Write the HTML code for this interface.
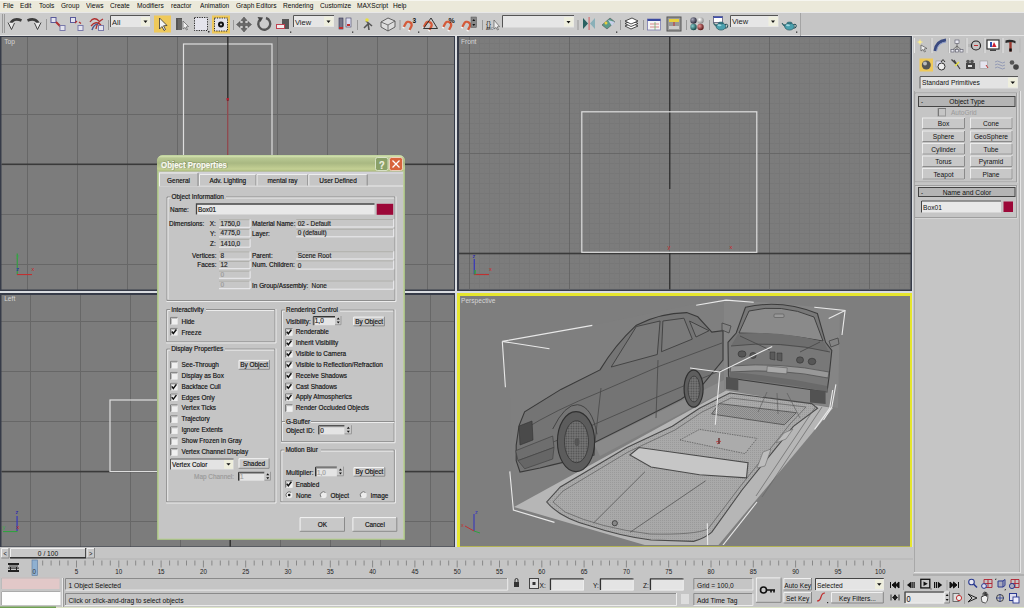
<!DOCTYPE html>
<html><head><meta charset="utf-8">
<style>
*{margin:0;padding:0;box-sizing:border-box}
html,body{width:1024px;height:608px;overflow:hidden;background:#c5c5c5;font-family:"Liberation Sans",sans-serif;font-size:7px;color:#1a1a1a;position:relative}
.a{position:absolute}
.t{position:absolute;white-space:nowrap;line-height:1}
svg{position:absolute;overflow:visible}
</style></head><body>
<div class="a" style="left:0;top:0;width:1024px;height:12px;background:#ebe9da;border-top:1px solid #f6f6f0"></div>
<div class="a" style="left:0;top:0;width:1024px;height:12px;color:#0a0a0a">
<span class="t" style="left:3px;top:2.4px;transform:scaleX(.94);transform-origin:0 0">File</span>
<span class="t" style="left:20px;top:2.4px;transform:scaleX(.94);transform-origin:0 0">Edit</span>
<span class="t" style="left:39px;top:2.4px;transform:scaleX(.94);transform-origin:0 0">Tools</span>
<span class="t" style="left:61px;top:2.4px;transform:scaleX(.94);transform-origin:0 0">Group</span>
<span class="t" style="left:86px;top:2.4px;transform:scaleX(.94);transform-origin:0 0">Views</span>
<span class="t" style="left:110px;top:2.4px;transform:scaleX(.94);transform-origin:0 0">Create</span>
<span class="t" style="left:137px;top:2.4px;transform:scaleX(.94);transform-origin:0 0">Modifiers</span>
<span class="t" style="left:171px;top:2.4px;transform:scaleX(.94);transform-origin:0 0">reactor</span>
<span class="t" style="left:200px;top:2.4px;transform:scaleX(.94);transform-origin:0 0">Animation</span>
<span class="t" style="left:236px;top:2.4px;transform:scaleX(.94);transform-origin:0 0">Graph Editors</span>
<span class="t" style="left:283px;top:2.4px;transform:scaleX(.94);transform-origin:0 0">Rendering</span>
<span class="t" style="left:320px;top:2.4px;transform:scaleX(.94);transform-origin:0 0">Customize</span>
<span class="t" style="left:357px;top:2.4px;transform:scaleX(.94);transform-origin:0 0">MAXScript</span>
<span class="t" style="left:393px;top:2.4px;transform:scaleX(.94);transform-origin:0 0">Help</span>
</div>
<div class="a" style="left:0;top:12px;width:1024px;height:24px;background:#c5c5c5;border-top:1px solid #e8e8e8;border-bottom:1px solid #e2e2e2"></div>
<div class="a" style="left:0;top:13px;width:800px;height:22px;background:#cbcbcb"></div>
<div class="a" style="left:800px;top:13px;width:1px;height:23px;background:#a4a4a4"></div>
<svg style="left:0;top:0" width="1024" height="40">
<!-- grip -->
<rect x="2" y="14" width="1" height="19" fill="#9a9a9a"/><rect x="4" y="14" width="1" height="19" fill="#9a9a9a"/>
<!-- undo / redo -->
<path d="M10 24.5 Q13 17 21.5 20.5" fill="none" stroke="#3c3c3c" stroke-width="2.6"/>
<path d="M8 22.5 L11.5 29.5 L14.5 23" fill="#e8e8e8" stroke="#333" stroke-width=".9"/>
<path d="M39 24.5 Q36 17 27.5 20.5" fill="none" stroke="#3c3c3c" stroke-width="2.6"/>
<path d="M41 22.5 L37.5 29.5 L34.5 23" fill="#e8e8e8" stroke="#333" stroke-width=".9"/>
<rect x="46" y="19" width="1" height="11" fill="#999"/>
<!-- link -->
<rect x="51" y="17.5" width="5" height="5" fill="#e4e4ee" stroke="#5a5a9a" stroke-width="1"/>
<path d="M56 22 L61 27" stroke="#b03030" stroke-width="2"/>
<rect x="60" y="25.5" width="5" height="5" fill="#e4e4ee" stroke="#7a7aaa" stroke-width="1"/>
<!-- unlink -->
<rect x="70.5" y="17.5" width="5" height="5" fill="#e4e4ee" stroke="#5a5a9a" stroke-width="1"/>
<path d="M75 23 L77 21 M79 22 L81 23.5" stroke="#b03030" stroke-width="1.2"/>
<rect x="78" y="25.5" width="5" height="5" fill="#e4e4ee" stroke="#7a7aaa" stroke-width="1"/>
<!-- bind -->
<path d="M90 22 Q94 16 99 21 M91 26 Q96 20 101 25 M96 29 Q97 22 103 19" fill="none" stroke="#b03030" stroke-width="1.3"/>
<path d="M92 30 Q94 24 98 24" fill="none" stroke="#4a5a90" stroke-width="1.5"/>
<rect x="98.5" y="25.5" width="5" height="5" fill="#e4e4ee" stroke="#7a7aaa" stroke-width="1"/>
<rect x="108" y="20" width="1" height="10" fill="#999"/>
<!-- All dropdown -->
<rect x="110" y="15.5" width="40" height="11.5" fill="#e6e6e6"/>
<path d="M110.5 27 V15.5 H150" fill="none" stroke="#555" stroke-width="1"/>
<rect x="141" y="17" width="9" height="9" fill="#efefdf"/>
<path d="M143.5 20.5 h4 l-2 2.5z" fill="#111"/>
<text x="112" y="24.5" font-size="7.5" fill="#222" font-family="Liberation Sans">All</text>
<!-- select (yellow) -->
<rect x="154" y="15.5" width="17" height="17" fill="#efc95a"/>
<path d="M159.5 18 V29 L162 26.5 L164 30.5 L165.5 29.5 L163.5 25.8 L167 25.5 Z" fill="#f4f4f4" stroke="#333" stroke-width=".8"/>
<!-- select by name -->
<path d="M176 18 h6 v1 h-4 v11 h-2z" fill="#555"/><rect x="178" y="19" width="4" height="11" fill="#666"/>
<path d="M183 21 V29 L185 27.5 L186.5 30 L187.5 29.5 L186 27 L188.5 26.5 Z" fill="#eee" stroke="#444" stroke-width=".6"/>
<!-- rect select -->
<rect x="194.5" y="17.5" width="13" height="13" fill="#e4e4ec" stroke="#222" stroke-width="1" stroke-dasharray="1.2 1.2"/>
<rect x="208" y="31" width="1.5" height="1.5" fill="#333"/>
<!-- window crossing yellow -->
<rect x="212" y="15.5" width="18" height="18" fill="#efc95a"/>
<rect x="214.5" y="18" width="13" height="13" fill="#e4e4ec" stroke="#222" stroke-width="1" stroke-dasharray="1.2 1.2"/>
<circle cx="221" cy="24.5" r="3" fill="#111"/><circle cx="221" cy="24.5" r="1" fill="#ddd"/>
<rect x="233" y="20" width="1" height="10" fill="#999"/>
<!-- move -->
<path d="M244 17 L247 20.5 H245 V23.5 H248 V21.5 L251.5 24.5 L248 27.5 V25.5 H245 V28.5 H247 L244 32 L241 28.5 H243 V25.5 H240 V27.5 L236.5 24.5 L240 21.5 V23.5 H243 V20.5 H241 Z" fill="#6a6a6a" stroke="#444" stroke-width=".5"/>
<!-- rotate -->
<path d="M260 19.5 A6 6 0 1 0 266 18" fill="none" stroke="#555" stroke-width="2.4"/>
<path d="M257.5 17 L263 17.5 L260.5 22 Z" fill="#444"/>
<!-- scale -->
<rect x="282" y="19" width="7" height="10" fill="#555"/>
<rect x="276.5" y="24.5" width="8" height="4" fill="#eee" stroke="#c04050" stroke-width="1"/>
<rect x="290" y="31.5" width="1.3" height="1.3" fill="#333"/>
<!-- View dropdown -->
<rect x="293" y="15" width="41" height="12" fill="#e6e6e6"/>
<path d="M293.5 27 V15.5 H334" fill="none" stroke="#555" stroke-width="1"/>
<rect x="324" y="16.5" width="9.5" height="9.5" fill="#efefdf"/>
<path d="M326.5 20.5 h4 l-2 2.5z" fill="#111"/>
<text x="295" y="24.5" font-size="7.5" fill="#222" font-family="Liberation Sans">View</text>
<!-- pivot -->
<rect x="339" y="18" width="4" height="11" fill="#778" stroke="#335" stroke-width=".6"/><rect x="339" y="27" width="4" height="2" fill="#c03030"/>
<rect x="346" y="18" width="5" height="9" fill="#dde" stroke="#446" stroke-width=".6"/><rect x="347" y="24" width="3" height="2" fill="#c03030"/>
<rect x="352" y="31.5" width="1.3" height="1.3" fill="#333"/>
<rect x="357" y="20" width="1" height="10" fill="#999"/>
<!-- manipulate -->
<path d="M364 28 L369 23 M366 21 L372 26 M368 23 L369 30" stroke="#555" stroke-width="1.6"/>
<circle cx="367" cy="20" r="1.8" fill="#e8e040"/>
<!-- keyboard override box -->
<path d="M381 22 L388 18 L395 21 L395 27 L388 31 L381 27 Z" fill="#ddd" stroke="#444" stroke-width=".8"/>
<path d="M381 22 L388 25 L395 21 M388 25 V31" fill="none" stroke="#555" stroke-width=".8"/>
<rect x="399.5" y="20" width="1" height="10" fill="#999"/>
<!-- snaps -->
<g transform="rotate(28 408.5 25)"><path d="M405.3 29 V25 A3.2 3.2 0 0 1 411.7 25 V29" fill="none" stroke="#d45a3a" stroke-width="2.3"/><path d="M404.2 29.6 h2.2 M410.6 29.6 h2.2" stroke="#f4f4f4" stroke-width="1.4"/></g><g transform="rotate(28 428.5 25)"><path d="M425.3 29 V25 A3.2 3.2 0 0 1 431.7 25 V29" fill="none" stroke="#d45a3a" stroke-width="2.3"/><path d="M424.2 29.6 h2.2 M430.6 29.6 h2.2" stroke="#f4f4f4" stroke-width="1.4"/></g><g transform="rotate(28 448 25)"><path d="M444.8 29 V25 A3.2 3.2 0 0 1 451.2 25 V29" fill="none" stroke="#d45a3a" stroke-width="2.3"/><path d="M443.7 29.6 h2.2 M450.1 29.6 h2.2" stroke="#f4f4f4" stroke-width="1.4"/></g><g transform="rotate(28 467 25)"><path d="M463.8 29 V25 A3.2 3.2 0 0 1 470.2 25 V29" fill="none" stroke="#d45a3a" stroke-width="2.3"/><path d="M462.7 29.6 h2.2 M469.1 29.6 h2.2" stroke="#f4f4f4" stroke-width="1.4"/></g>
<text x="412.5" y="23" font-size="6.5" font-weight="bold" fill="#111" font-family="Liberation Sans">3</text>
<path d="M423.5 28.5 H437.5 L431 18 Z" fill="none" stroke="#222" stroke-width=".9"/>
<text x="448.5" y="23" font-size="7" font-weight="bold" fill="#111" font-family="Liberation Sans">%</text>
<rect x="471" y="17" width="5.5" height="10.5" fill="#888" stroke="#555" stroke-width=".5"/><path d="M472.3 21 h3 l-1.5 -2z M472.3 24 h3 l-1.5 2z" fill="#111"/>
<rect x="418" y="31.5" width="1.3" height="1.3" fill="#333"/>
<rect x="482" y="20" width="1" height="10" fill="#999"/>
<!-- named sel icon -->
<text x="486" y="26" font-size="7.5" fill="#333" font-family="Liberation Sans">{}</text>
<text x="486" y="30" font-size="3.5" fill="#333" font-family="Liberation Sans">ABC</text>
<path d="M494 20 V29 L496 27.5 L497.5 30 L498.5 29.5 L497 27 L499.5 26.5 Z" fill="#eee" stroke="#444" stroke-width=".6"/>
<!-- named sel dropdown -->
<rect x="502" y="15.5" width="72" height="12" fill="#e6e6e6"/>
<path d="M502.5 27.5 V15.5 H574" fill="none" stroke="#555" stroke-width="1"/>
<rect x="564" y="17" width="9.5" height="9.5" fill="#efefdf"/>
<path d="M566.5 21 h4 l-2 2.5z" fill="#111"/>
<rect x="577.5" y="20" width="1" height="10" fill="#999"/>
<!-- mirror -->
<path d="M583 18 L588 23.5 L583 29 Z" fill="#2a6060"/><path d="M595 18 L590 23.5 L595 29 Z" fill="#8ab0b8"/>
<rect x="588.5" y="17" width="1.2" height="13" fill="#d07070"/>
<!-- align -->
<path d="M602 25 L610 18 L615 22 L607 29 Z" fill="#5a9a8a" stroke="#555" stroke-width=".6"/>
<path d="M608 20 L615 22 L612 26 Z" fill="#c8d0e8"/>
<circle cx="606" cy="23" r="1.5" fill="#e8d040"/>
<rect x="616" y="31.5" width="1.3" height="1.3" fill="#333"/>
<rect x="620" y="20" width="1" height="10" fill="#999"/>
<!-- layers -->
<g fill="#fff" stroke="#222" stroke-width=".8"><path d="M625 26 L632 23 L638 26 L631 29 Z"/><path d="M625 23.5 L632 20.5 L638 23.5 L631 26.5 Z"/><path d="M625 21 L632 18 L638 21 L631 24 Z"/></g>
<rect x="643" y="20" width="1" height="10" fill="#999"/>
<!-- curve editor -->
<rect x="647.5" y="19" width="13" height="11" fill="#f4f4f4" stroke="#7a7ab0" stroke-width=".8"/>
<rect x="647.5" y="19" width="13" height="2" fill="#3a4aa0"/>
<path d="M650 24 H659 M650 27 H659" stroke="#d07070" stroke-width=".8"/><path d="M655 22 V30" stroke="#70b070" stroke-width=".8"/>
<!-- schematic -->
<rect x="667" y="17" width="14" height="14" fill="#999" stroke="#555" stroke-width="1"/>
<rect x="669" y="19" width="10" height="3" fill="#e8d040"/><rect x="669" y="26" width="10" height="3" fill="#ccc"/><rect x="673.5" y="22" width="1" height="4" fill="#c03030"/>
<rect x="686" y="20" width="1" height="10" fill="#999"/>
<!-- material -->
<defs><radialGradient id="sp1" cx=".35" cy=".35" r=".7"><stop offset="0" stop-color="#aab"/><stop offset="1" stop-color="#223"/></radialGradient>
<radialGradient id="sp2" cx=".35" cy=".35" r=".7"><stop offset="0" stop-color="#fff"/><stop offset="1" stop-color="#888"/></radialGradient>
<radialGradient id="sp3" cx=".35" cy=".35" r=".7"><stop offset="0" stop-color="#8cc"/><stop offset="1" stop-color="#144"/></radialGradient>
<radialGradient id="sp4" cx=".35" cy=".35" r=".7"><stop offset="0" stop-color="#e99"/><stop offset="1" stop-color="#511"/></radialGradient></defs>
<circle cx="693.5" cy="20.5" r="3.2" fill="url(#sp1)"/><circle cx="700.5" cy="20.5" r="3.2" fill="url(#sp2)"/>
<circle cx="693.5" cy="27" r="3.2" fill="url(#sp3)"/><circle cx="700.5" cy="27" r="3.2" fill="url(#sp4)"/>
<rect x="709" y="20" width="1" height="10" fill="#999"/>
<!-- render scene -->
<rect x="713.5" y="16.5" width="9" height="6" fill="#fff" stroke="#446" stroke-width=".7"/><rect x="713.5" y="16.5" width="9" height="1.5" fill="#4050b0"/>
<path d="M716.5 26.5 Q714 25.5 713.5 23.0 Q715 25.0 717 25.0" fill="#3a8a98" stroke="#1e4a52" stroke-width=".6"/><path d="M725 24.5 Q728.5 23.5 727.5 27.0 Q727 28.5 725 28.0" fill="none" stroke="#1e4a52" stroke-width="1"/><ellipse cx="721" cy="26.5" rx="4.8" ry="3.6" fill="#4aa0ae" stroke="#1e4a52" stroke-width=".6"/><ellipse cx="719.5" cy="25.3" rx="2" ry="1" fill="#a0d8e0"/><ellipse cx="721" cy="22.9" rx="2.5" ry=".9" fill="#3a8a98" stroke="#1e4a52" stroke-width=".5"/>
<!-- render dropdown -->
<rect x="730" y="15" width="48.5" height="12" fill="#e6e6e6"/>
<path d="M730.5 27 V15.5 H778" fill="none" stroke="#555" stroke-width="1"/>
<rect x="768.5" y="16.5" width="9.5" height="9.5" fill="#efefdf"/>
<path d="M771 20.5 h4 l-2 2.5z" fill="#111"/>
<text x="732" y="24" font-size="7.5" fill="#222" font-family="Liberation Sans">View</text>
<!-- quick render -->
<path d="M785.0 26.5 Q782.5 25.5 782.0 23.0 Q783.5 25.0 785.5 25.0" fill="#3a8a98" stroke="#1e4a52" stroke-width=".6"/><path d="M793.5 24.5 Q797.0 23.5 796.0 27.0 Q795.5 28.5 793.5 28.0" fill="none" stroke="#1e4a52" stroke-width="1"/><ellipse cx="789.5" cy="26.5" rx="4.8" ry="3.6" fill="#4aa0ae" stroke="#1e4a52" stroke-width=".6"/><ellipse cx="788.0" cy="25.3" rx="2" ry="1" fill="#a0d8e0"/><ellipse cx="789.5" cy="22.9" rx="2.5" ry=".9" fill="#3a8a98" stroke="#1e4a52" stroke-width=".5"/>
<rect x="796" y="31.5" width="1.3" height="1.3" fill="#333"/>
</svg>
<svg class="a" style="left:0;top:0" width="913" height="548" viewBox="0 0 913 548">
<defs>
<pattern id="gTop" x="27" y="64" width="50" height="50" patternUnits="userSpaceOnUse"><rect width="50" height="50" fill="#7c7c7c"/><rect width="1" height="50" fill="#676767"/><rect width="50" height="1" fill="#676767"/></pattern>
<pattern id="gLeft" x="30" y="321" width="50" height="50" patternUnits="userSpaceOnUse"><rect width="50" height="50" fill="#7c7c7c"/><rect width="1" height="50" fill="#676767"/><rect width="50" height="1" fill="#676767"/></pattern>
<pattern id="gFront" x="469" y="53" width="10" height="10" patternUnits="userSpaceOnUse"><rect width="10" height="10" fill="#7c7c7c"/><rect width="1" height="10" fill="#777"/><rect width="10" height="1" fill="#777"/><rect x="5" width="1" height="10" fill="#7a7a7a"/><rect y="5" width="10" height="1" fill="#7a7a7a"/></pattern>
<pattern id="gFrontM" x="469" y="53" width="100" height="100" patternUnits="userSpaceOnUse"><rect width="1" height="100" fill="#676767"/><rect width="100" height="1" fill="#676767"/></pattern>
<pattern id="gPersp" x="0" y="0" width="10" height="10" patternUnits="userSpaceOnUse"><rect width="10" height="10" fill="#7c7c7c"/><rect width="1" height="10" fill="#777"/><rect width="10" height="1" fill="#777"/></pattern>
</defs>
<!-- separators -->
<rect x="0" y="36" width="913" height="512" fill="#d9dce0"/>
<!-- Top -->
<rect x="0" y="36" width="455" height="255" fill="#363b48"/>
<rect x="1.5" y="37" width="452.5" height="252.5" fill="url(#gTop)"/>
<!-- Front -->
<rect x="457" y="36" width="455" height="255" fill="#363b48"/>
<rect x="459" y="37" width="451.5" height="252.5" fill="url(#gFront)" />
<rect x="459" y="37" width="451.5" height="252.5" fill="url(#gFrontM)"/>
<!-- Left -->
<rect x="0" y="293" width="455" height="255" fill="#363b48"/>
<rect x="1.5" y="295" width="452.5" height="251.5" fill="url(#gLeft)"/>
<!-- Persp -->
<rect x="457" y="293" width="455" height="255" fill="#e6e62e"/>
<rect x="460" y="296" width="450" height="250.5" fill="#7e7e7e"/>
</svg>
<svg style="left:0;top:0" width="913" height="548">
<defs><clipPath id="cTop"><rect x="1.5" y="37" width="452.5" height="252.5"/></clipPath>
<clipPath id="cLeft"><rect x="1.5" y="295" width="452.5" height="251.5"/></clipPath>
<clipPath id="cFront"><rect x="459" y="37" width="452" height="252.5"/></clipPath>
<clipPath id="cPersp"><rect x="460" y="296" width="450" height="249"/></clipPath></defs>
<g font-family="Liberation Sans" font-size="7.2" fill="#d6d6d6">
<text x="4.2" y="44.3" transform="translate(4.2 0) scale(.92 1) translate(-4.2 0)">Top</text>
<text x="461" y="44.3" transform="translate(461 0) scale(.92 1) translate(-461 0)">Front</text>
<text x="4.2" y="301" transform="translate(4.2 0) scale(.92 1) translate(-4.2 0)">Left</text>
<text x="461" y="302.6" transform="translate(461 0) scale(.92 1) translate(-461 0)">Perspective</text>
</g>
<!-- Top viewport -->
<g clip-path="url(#cTop)">
<rect x="1.5" y="163.5" width="453" height="1.6" fill="#3a3a3a"/>
<rect x="183.5" y="44" width="88.5" height="200" fill="none" stroke="#dedede" stroke-width="1.2"/>
<rect x="227.2" y="37" width="1.3" height="64" fill="#2a2a2a"/>
<rect x="227.3" y="101" width="1" height="60" fill="#a04048"/>
<rect x="226.5" y="98" width="2.5" height="2.5" fill="#b02030"/>
<!-- tripod -->
<rect x="16.7" y="253.5" width="1.1" height="21" fill="#30a040"/>
<rect x="17" y="274" width="15" height="1.1" fill="#c03030"/>
<text x="16" y="258" font-size="5.5" fill="#30b040" font-family="Liberation Sans">y</text>
<text x="16.3" y="271" font-size="5.5" fill="#2020b0" font-family="Liberation Sans">z</text>
<text x="31.5" y="271" font-size="5.5" fill="#d02020" font-family="Liberation Sans">x</text>
</g>
<!-- Front viewport -->
<g clip-path="url(#cFront)">
<rect x="459" y="252.7" width="453" height="1.6" fill="#3a3a3a"/>
<rect x="669.2" y="37" width="1.2" height="152" fill="#2a2a2a"/>
<rect x="669.2" y="253" width="1.2" height="37" fill="#2a2a2a"/>
<rect x="581.8" y="111.8" width="175" height="140.5" fill="none" stroke="#dedede" stroke-width="1.2"/>
<text x="667.5" y="249" font-size="5.5" fill="#d02020" font-family="Liberation Sans">y</text>
<text x="729.5" y="249" font-size="5.5" fill="#d02020" font-family="Liberation Sans">x</text>
<rect x="473.7" y="259" width="1.1" height="15.5" fill="#3030c0"/>
<rect x="474" y="274" width="15" height="1.1" fill="#c03030"/>
<rect x="474.3" y="270" width="1.5" height="4.5" fill="#30a040"/>
<text x="472.5" y="258" font-size="5.5" fill="#2020b0" font-family="Liberation Sans">z</text>
<text x="489" y="271" font-size="5.5" fill="#d02020" font-family="Liberation Sans">x</text>
</g>
<!-- Left viewport -->
<g clip-path="url(#cLeft)">
<rect x="1.5" y="470.8" width="453" height="1.6" fill="#3a3a3a"/><rect x="229.5" y="295" width="1.3" height="252" fill="#2a2a2a"/>
<rect x="110" y="400" width="100" height="71.5" fill="none" stroke="#dedede" stroke-width="1.2"/>
<rect x="16.5" y="516" width="1.1" height="15" fill="#3030c0"/>
<rect x="3" y="531" width="14.5" height="1.1" fill="#30a040"/>
<text x="15.5" y="514" font-size="5.5" fill="#2020b0" font-family="Liberation Sans">z</text>
<text x="2.5" y="529" font-size="5.5" fill="#30b040" font-family="Liberation Sans">y</text>
<text x="16.5" y="529" font-size="5.5" fill="#d02020" font-family="Liberation Sans">x</text>
</g>
</svg>
<svg style="left:0;top:0" width="913" height="548">
<defs><pattern id="hatch" width="2" height="2" patternUnits="userSpaceOnUse"><rect width="2" height="2" fill="#a9a9a9"/><rect width="1" height="1" fill="#9a9a9a"/></pattern>
<pattern id="hatch2" width="2" height="2" patternUnits="userSpaceOnUse"><rect width="2" height="2" fill="#9c9c9c"/><rect width="1" height="1" fill="#868686"/><rect x="1" y="1" width="1" height="1" fill="#8a8a8a"/></pattern></defs>
<g clip-path="url(#cPersp)">
<!-- side plane -->
<polygon points="508,343 724,298 724,391 514,508" fill="#7f7f7f"/><polygon points="594,444 724,380 724,391 600,456" fill="#8a8a8a"/>
<!-- front plane -->
<polygon points="724,299 840,309 838,408 724,391" fill="#858585"/>
<!-- floor plane -->
<polygon points="514,507 726,390.5 833,408 716,548 655,548" fill="#b6b6b6"/>
<!-- car top view -->
<path d="M546.7 502 Q560 518 590.5 526 Q620 536 651 540 L693.5 541.4 Q705 538 711.6 532.3 L742 490 L793.4 426.3 L817.6 408.2 L811.6 403.6 L729.8 393 L699.5 408.2 L672.3 426.3 L626.9 447.5 L560.3 487 Z" fill="url(#hatch)" stroke="#4a4a4a" stroke-width="1.1"/>
<path d="M553 502 L563 491 L628 452 L675 430 L702 412 L731 398 L806 407 L790 424 L739 488 L708 529 Q695 535 650 534 Q600 528 565 512 Z" fill="none" stroke="#666" stroke-width=".8"/>
<!-- windshield -->
<polygon points="629.9,455 639,447.5 748,462.7 746.5,477.8 699.5,474.8 651,467" fill="#c6c6c6" stroke="#4a4a4a" stroke-width="1.1"/>
<!-- sunroof -->
<polygon points="680,440 699.5,429.4 757,438.4 745,453.6" fill="#ababab" stroke="#555" stroke-width=".7" stroke-dasharray="1.5 1"/>
<!-- rear window -->
<polygon points="711.6,414 719.2,403.6 796.4,412.7 784.3,424.8" fill="url(#hatch2)" stroke="#555" stroke-width=".9"/>
<path d="M757 468 L763 452 L771 449 L765 466 Z M776 443 L784 433 L793 429 L786 439 Z" fill="#bdbdbd" stroke="#6a6a6a" stroke-width=".6"/><path d="M816 406 L756 496 M822 407 L762 497" fill="none" stroke="#666" stroke-width=".7"/>
<path d="M593.6 523 L645 471.7 M630 532.3 L705.6 480.8" stroke="#4a4a4a" stroke-width=".7"/>
<circle cx="614.8" cy="523.2" r="2.6" fill="#888" stroke="#333" stroke-width=".8"/>
<!-- side car -->
<path d="M516.2 460.7 L516.2 445.3 L519 425.8 L524.6 411.8 L560.9 389.4 L600 369.9 Q615 345 636.4 325.2 Q660 313 686.7 312.6 L697.8 316.8 L711.8 332.1 L723 330.7 L723 360.1 L703.4 383.8 L681 399.2 L594.4 442.5 L594 455 L552.5 464.9 L540 468 L520 472 Z" fill="#747474" stroke="#3a3a3a" stroke-width="1.1"/>
<path d="M611.2 367 L636.4 326.5 L660.1 321 L657.3 354.5 Z M662.9 321 L683.9 318.2 L692.3 339.1 L661.5 351.7 Z M689.5 321 L709 330.7 L696 337 Z" fill="#7a7a7a" stroke="#3e3e3e" stroke-width=".9"/>
<path d="M523 430 Q555 410 600 392 L660 366 L722 343 M530 452 L595 424 L650 400 L722 370 M601 388 L595 442 M658 360 L656 418" fill="none" stroke="#484848" stroke-width=".8"/>

<defs><pattern id="mesh" width="2.5" height="2.5" patternUnits="userSpaceOnUse"><rect width="2.5" height="2.5" fill="#777"/><circle cx="1.25" cy="1.25" r=".8" fill="#4a4a4a"/></pattern></defs>
<path d="M552.7 429 Q565 404 577.4 404.7 Q592 406 597 434.3" fill="none" stroke="#444" stroke-width="1"/>
<ellipse cx="576" cy="441.6" rx="18.6" ry="30" fill="#5c5c5c" stroke="#303030" stroke-width="1.1"/>
<ellipse cx="576.5" cy="441.7" rx="12" ry="21" fill="url(#mesh)" stroke="#3a3a3a" stroke-width=".9"/>
<ellipse cx="577" cy="442" rx="2.5" ry="4" fill="#555"/>
<ellipse cx="693.6" cy="388.7" rx="9.5" ry="18.5" fill="#5e5e5e" stroke="#303030" stroke-width="1.2"/>
<ellipse cx="694" cy="389" rx="6" ry="13" fill="url(#mesh)" stroke="#3c3c3c" stroke-width=".8"/>
<path d="M519 426 L532 421 L533 440 L520 445 Z" fill="#4a4a4a" stroke="#333" stroke-width=".6"/>
<path d="M515.7 450.7 L552.7 436 L554 447.4 L518 460.6 Z" fill="#6e6e6e" stroke="#444" stroke-width=".7"/><path d="M518 460.6 L554 447.4 L552.7 459 L524.7 468.8 Z" fill="#666" stroke="#444" stroke-width=".7"/>
<!-- front car -->
<path d="M745.5 307.3 Q781 299 817.4 313.5 L825.6 342.3 L831.8 350.5 L829 377.2 L827 392 L729 378 L728.5 375 L728 342.3 L736.2 333 Z" fill="#787878" stroke="#3c3c3c" stroke-width="1.1"/>
<path d="M749 311 Q781 303 814 317 L823 341 Q780 333 739 333 Z" fill="#8a8a8a" stroke="#404040" stroke-width="1"/>
<rect x="774" y="314" width="10" height="3.5" rx="1" fill="#999" stroke="#555" stroke-width=".6"/>
<path d="M738 334 Q780 330 824 342 L829 352 Q780 342 731 346 Z" fill="#6e6e6e"/>
<path d="M731 346 Q780 340 830 352 M740 336 L770 350 M820 342 L800 352" fill="none" stroke="#454545" stroke-width=".8"/>
<path d="M731 366 Q780 362 829 372 L828 378 Q780 368 730 372 Z" fill="#989898" stroke="#4a4a4a" stroke-width=".7"/>
<rect x="767" y="367" width="20" height="6" fill="#aaa" stroke="#555" stroke-width=".5" transform="rotate(5 777 370)"/>
<path d="M730 378 Q780 382 828 392 L827 386 Q780 376 730 372 Z" fill="#6a6a6a"/>
<g fill="#565656" stroke="#333" stroke-width=".6"><ellipse cx="742" cy="354" rx="4" ry="3.2"/><ellipse cx="753" cy="355.5" rx="3.2" ry="3"/><ellipse cx="800" cy="360" rx="3.5" ry="3.2"/><ellipse cx="812" cy="361.5" rx="3.8" ry="3.3"/></g>
<path d="M770 352 l5 0 l0 8 l-5 -1z M777 353 l5 0 l0 8 l-5 -1z" fill="#5a5a5a" stroke="#333" stroke-width=".5"/>
<path d="M726 377 L738.3 378.5 L738.3 390.5 L726 389 Z" fill="#525252"/>
<path d="M810 389.5 L825.6 391 L825.6 404 L810 402.5 Z" fill="#525252"/>
<path d="M722 323 l9 3 l-2 7 l-7 -3z M829 341 l9 -3 l1 6 l-8 3z" fill="#838383" stroke="#444" stroke-width=".8"/>
<path d="M767 392 L758 412 M787 393 L800 418 M777 393 L778 414" stroke="#555" stroke-width=".6"/>
<!-- selection brackets -->
<g fill="none" stroke="#e8e8e8" stroke-width="1.1">
<path d="M592.3 325.4 L502.3 341.4 L549.5 348.8 M502.3 341.4 L505.4 387.3"/>
<path d="M696.2 305.3 L726 300.1 L753.7 302.2"/>
<path d="M814.3 307.3 L845.1 310.4 L842 335 M845.1 310.4 L828.7 318.6"/>
<path d="M835.9 384.4 L831.8 407 L823.5 420"/>
<path d="M772.2 346.4 L719.8 372 L690 368 M719.8 372 L715.3 424.8"/>
<path d="M509.8 471.4 L513.4 510 L554.5 522.4"/>
<path d="M707.3 523.2 L707.7 548"/>
<path d="M757 502 L720.7 548"/>
<path d="M832.7 390 L829.7 408.2 L814.6 429.4"/>
</g>
<path d="M716 442 l3 -1 M719 438 v6 M717 444 l4 -3" stroke="#c03030" stroke-width=".8"/>
<path d="M719 438 v6" stroke="#222" stroke-width=".8"/>
<!-- tripod -->
<rect x="473.5" y="514" width="1" height="17" fill="#3030c0"/>
<path d="M474 531 L465 526" stroke="#c03030" stroke-width="1"/>
<path d="M474 531 L480 533" stroke="#30a040" stroke-width="1"/>
<text x="475" y="514" font-size="5.5" fill="#3030c0" font-family="Liberation Sans">z</text>
<text x="461" y="527" font-size="5.5" fill="#c03030" font-family="Liberation Sans">x</text>
</g>
</svg>
<div class="a" style="left:913px;top:36px;width:111px;height:512px;background:#c5c5c5"></div>
<div class="a" style="left:914px;top:91px;width:1px;height:482px;background:#a8a8a8"></div>
<div class="a" style="left:1019px;top:91px;width:1px;height:481px;background:#b0b0b0"></div><div class="a" style="left:1020px;top:91px;width:1px;height:482px;background:#e4e4e4"></div>
<svg style="left:0;top:0" width="1024" height="608">
<!-- tabs -->
<g fill="#b8b8b8"><rect x="930.5" y="38.5" width="1" height="14"/><rect x="948" y="38.5" width="1" height="14"/><rect x="965.5" y="38.5" width="1" height="14"/><rect x="983.5" y="38.5" width="1" height="14"/><rect x="1001.5" y="38.5" width="1" height="14"/><rect x="1019.5" y="38.5" width="1" height="14"/></g>
<g fill="#e6e6e6"><rect x="914" y="38" width="1" height="15"/><rect x="931.5" y="38" width="1" height="15"/><rect x="949" y="38" width="1" height="15"/><rect x="966.5" y="38" width="1" height="15"/><rect x="984.5" y="38" width="1" height="15"/><rect x="1002.5" y="38" width="1" height="15"/></g>
<!-- create icon -->
<path d="M921 45 V51 L923 49.5 L924.5 52 L925.5 51.5 L924 49 L927 48.5 Z" fill="#f0f0f0" stroke="#555" stroke-width=".7"/>
<circle cx="920" cy="42" r="1.6" fill="#fff6a0"/><path d="M917 42 h6 M920 39 v6" stroke="#f4e080" stroke-width=".6"/>
<!-- modify arc -->
<path d="M935 51 Q936 41 946 40" fill="none" stroke="#3a4a80" stroke-width="3"/>
<path d="M936.5 51 Q937.5 43 946 42" fill="none" stroke="#8898c8" stroke-width="1"/>
<!-- hierarchy -->
<rect x="955" y="40" width="4" height="3.5" fill="#e8e8f0" stroke="#556" stroke-width=".6"/>
<path d="M957 43.5 V46 M957 46 L952.5 50 M957 46 L957 50 M957 46 L961.5 50" stroke="#555" stroke-width=".7"/>
<g fill="#e8e8f0" stroke="#556" stroke-width=".6"><rect x="951" y="49.5" width="3" height="2.5"/><rect x="955.5" y="49.5" width="3" height="2.5"/><rect x="960" y="49.5" width="3" height="2.5"/></g>
<!-- motion -->
<circle cx="976" cy="45.5" r="4.5" fill="#c5c5c5" stroke="#222" stroke-width="1.2"/>
<path d="M974 45.5 h4" stroke="#c03030" stroke-width="1"/>
<path d="M969 44 v3 M970.5 43.5 v4" stroke="#999" stroke-width=".6"/>
<!-- display -->
<rect x="987" y="40" width="12" height="9" fill="#fff" stroke="#333" stroke-width="1.2"/>
<path d="M990 47 V42 h2 v5z" fill="#3050b0"/><path d="M992 47 L994 42 L996.5 47z" fill="#d02030"/>
<rect x="990" y="49.5" width="6" height="1.5" fill="#444"/>
<!-- utilities hammer -->
<path d="M1005.5 40.5 Q1010 39 1015.5 41 L1015.5 43.5 Q1012.5 41.8 1010.5 42.5 L1008 42.5 L1005.5 43 Z" fill="#2a2a2a"/><rect x="1009.3" y="42" width="2.4" height="9.5" fill="#9a3a30"/><rect x="1009.3" y="48.5" width="2.4" height="3" fill="#111"/>
<!-- row2 -->
<rect x="919.5" y="58.5" width="13.5" height="13" fill="#efc95a"/>
<circle cx="926.3" cy="65" r="4.5" fill="#555"/><circle cx="925" cy="63.5" r="2" fill="#bbb"/>
<g>
<rect x="936" y="61" width="6" height="6" fill="#dde" stroke="#888" stroke-width=".5"/><circle cx="941.5" cy="66.5" r="3.5" fill="#eee" stroke="#333" stroke-width="1"/><path d="M941 62 L943 59.5 L945 62" fill="none" stroke="#333" stroke-width="1"/>
</g>
<path d="M951.5 59.5 L956 64 M954 60 L960 69" stroke="#444" stroke-width="1.2"/><path d="M955 66 L959 62" stroke="#e8e040" stroke-width="1.5"/>
<rect x="966" y="63" width="9" height="6" fill="#444"/><circle cx="968" cy="61.5" r="1.8" fill="#555"/><circle cx="972" cy="61.5" r="1.8" fill="#555"/><rect x="968" y="65" width="4" height="2" fill="#e0e0e0"/>
<rect x="980" y="61" width="7.5" height="7.5" fill="#e4e4ee" stroke="#999" stroke-width=".6"/><path d="M986 65 l2 3" stroke="#c03030" stroke-width="1"/>
<path d="M995 62 q2.5 -2 5 0 t5 0 M995 65 q2.5 -2 5 0 t5 0 M995 68 q2.5 -2 5 0 t5 0" fill="none" stroke="#8890b0" stroke-width=".8"/>
<circle cx="1012" cy="62.5" r="2.3" fill="#555"/><circle cx="1016" cy="67" r="2.8" fill="#444"/>
<!-- dropdown -->
<rect x="919.5" y="76" width="98.5" height="12.5" fill="#e3e3e3"/>
<path d="M920 88.5 V76.5 H1018" fill="none" stroke="#555" stroke-width="1"/>
<rect x="1008" y="77.5" width="9.5" height="10" fill="#eeeedd"/>
<path d="M1010.5 81.5 h4.5 l-2.25 2.5z" fill="#111"/>
<text transform="translate(922 85.3) scale(0.88 1)" font-size="7.6" fill="#111" font-family="Liberation Sans">Standard Primitives</text>
<!-- rollout object type -->
<rect x="915.5" y="93.5" width="101.5" height="89" fill="none" stroke="#e4e4e4" stroke-width="1"/>
<rect x="915" y="93" width="101.5" height="89" fill="none" stroke="#9e9e9e" stroke-width="1"/>
<rect x="918.5" y="96.5" width="96.5" height="10" fill="#b4b4b4" stroke="#444" stroke-width="1"/>
<text transform="translate(921 104) scale(0.88 1)" font-size="7" fill="#111" font-family="Liberation Sans">-</text>
<text transform="translate(967 104) scale(0.88 1)" font-size="7.6" fill="#111" font-family="Liberation Sans" text-anchor="middle">Object Type</text>
<rect x="938" y="108.5" width="7.5" height="7.5" fill="none" stroke="#999" stroke-width="1"/>
<path d="M938.5 116 V108.5 H946" fill="none" stroke="#777" stroke-width="1"/>
<text transform="translate(951 115) scale(0.88 1)" font-size="7.4" fill="#999" font-family="Liberation Sans">AutoGrid</text>
<g font-family="Liberation Sans" font-size="7.6" fill="#111" text-anchor="middle">
<rect x="922.5" y="118" width="42" height="10.5" fill="#c8c8c8" stroke="#ececec" stroke-width="1"/><path d="M922.5 128.5 H964.5 V118" stroke="#8a8a8a" fill="none"/><text transform="translate(943.5 126) scale(0.88 1)">Box</text>
<rect x="970.5" y="118" width="41.5" height="10.5" fill="#c8c8c8" stroke="#ececec" stroke-width="1"/><path d="M970.5 128.5 H1012 V118" stroke="#8a8a8a" fill="none"/><text transform="translate(991 126) scale(0.88 1)">Cone</text>
<rect x="922.5" y="131" width="42" height="10.5" fill="#c8c8c8" stroke="#ececec" stroke-width="1"/><path d="M922.5 141.5 H964.5 V131" stroke="#8a8a8a" fill="none"/><text transform="translate(943.5 139) scale(0.88 1)">Sphere</text>
<rect x="970.5" y="131" width="41.5" height="10.5" fill="#c8c8c8" stroke="#ececec" stroke-width="1"/><path d="M970.5 141.5 H1012 V131" stroke="#8a8a8a" fill="none"/><text transform="translate(991 139) scale(0.88 1)">GeoSphere</text>
<rect x="922.5" y="143.5" width="42" height="10.5" fill="#c8c8c8" stroke="#ececec" stroke-width="1"/><path d="M922.5 154 H964.5 V143.5" stroke="#8a8a8a" fill="none"/><text transform="translate(943.5 151.5) scale(0.88 1)">Cylinder</text>
<rect x="970.5" y="143.5" width="41.5" height="10.5" fill="#c8c8c8" stroke="#ececec" stroke-width="1"/><path d="M970.5 154 H1012 V143.5" stroke="#8a8a8a" fill="none"/><text transform="translate(991 151.5) scale(0.88 1)">Tube</text>
<rect x="922.5" y="156" width="42" height="10.5" fill="#c8c8c8" stroke="#ececec" stroke-width="1"/><path d="M922.5 166.5 H964.5 V156" stroke="#8a8a8a" fill="none"/><text transform="translate(943.5 164) scale(0.88 1)">Torus</text>
<rect x="970.5" y="156" width="41.5" height="10.5" fill="#c8c8c8" stroke="#ececec" stroke-width="1"/><path d="M970.5 166.5 H1012 V156" stroke="#8a8a8a" fill="none"/><text transform="translate(991 164) scale(0.88 1)">Pyramid</text>
<rect x="922.5" y="168.5" width="42" height="10.5" fill="#c8c8c8" stroke="#ececec" stroke-width="1"/><path d="M922.5 179 H964.5 V168.5" stroke="#8a8a8a" fill="none"/><text transform="translate(943.5 176.5) scale(0.88 1)">Teapot</text>
<rect x="970.5" y="168.5" width="41.5" height="10.5" fill="#c8c8c8" stroke="#ececec" stroke-width="1"/><path d="M970.5 179 H1012 V168.5" stroke="#8a8a8a" fill="none"/><text transform="translate(991 176.5) scale(0.88 1)">Plane</text>
</g>
<!-- name and color -->
<rect x="915.5" y="186" width="101.5" height="32" fill="none" stroke="#e4e4e4" stroke-width="1"/>
<rect x="915" y="185.5" width="101.5" height="32" fill="none" stroke="#9e9e9e" stroke-width="1"/>
<rect x="918.5" y="187.5" width="96.5" height="9" fill="#b4b4b4" stroke="#444" stroke-width="1"/>
<text transform="translate(921 194.5) scale(0.88 1)" font-size="7" fill="#111" font-family="Liberation Sans">-</text>
<text transform="translate(967 194.5) scale(0.88 1)" font-size="7.6" fill="#111" font-family="Liberation Sans" text-anchor="middle">Name and Color</text>
<rect x="921" y="200.5" width="80" height="12" fill="#e8e8e8"/>
<path d="M921.5 212.5 V201 H1001" fill="none" stroke="#444" stroke-width="1"/>
<text transform="translate(923 209.5) scale(0.88 1)" font-size="7.6" fill="#111" font-family="Liberation Sans">Box01</text>
<rect x="1003.5" y="201.5" width="9.5" height="10.5" fill="#9c0838"/>
</svg>
<svg style="left:0;top:0" width="1024" height="608"><g font-family="Liberation Sans">
<rect x="0" y="547" width="913" height="61" fill="#c5c5c5"/>
<rect x="1" y="548" width="8.5" height="10.5" fill="#c8c8c8"/>
<path d="M1.5 558.5 V548.5 H9.5" fill="none" stroke="#f0f0f0" stroke-width="1"/>
<path d="M1 558.0 H9.0 V548" fill="none" stroke="#858585" stroke-width="1"/>
<text transform="translate(5.2 556) scale(0.83 1)" font-size="7" fill="#111" text-anchor="middle">&lt;</text>
<rect x="10" y="548" width="76" height="10.5" fill="#c8c8c8"/>
<path d="M10.5 558.5 V548.5 H86" fill="none" stroke="#f0f0f0" stroke-width="1"/>
<path d="M10 558.0 H85.5 V548" fill="none" stroke="#858585" stroke-width="1"/>
<path d="M10 557.8 H86 V548" fill="none" stroke="#333" stroke-width="1.4"/>
<text transform="translate(48 556.3) scale(0.83 1)" font-size="8" fill="#111" text-anchor="middle">0 / 100</text>
<rect x="86.5" y="548" width="8.5" height="10.5" fill="#c8c8c8"/>
<path d="M87.0 558.5 V548.5 H95" fill="none" stroke="#f0f0f0" stroke-width="1"/>
<path d="M86.5 558.0 H94.5 V548" fill="none" stroke="#858585" stroke-width="1"/>
<text transform="translate(90.8 556) scale(0.83 1)" font-size="7" fill="#111" text-anchor="middle">&gt;</text>
<rect x="95" y="558.5" width="818" height="1" fill="#b4b4b4"/>
<rect x="8" y="563" width="11" height="2" fill="#222"/>
<rect x="9" y="565.5" width="9" height="1" fill="#444"/>
<rect x="8" y="567.5" width="11" height="1.2" fill="#333"/>
<rect x="8" y="570" width="11" height="2" fill="#222"/>
<path d="M10.5 567 v3 M16.5 567 v3" fill="none" stroke="#222" stroke-width="1"/>
<rect x="32" y="560" width="5.5" height="15.5" fill="#8fb0d0" stroke="#5a7aa0" stroke-width="0.6"/>
<path d="M42.7 560.5 v5 M51.1 560.5 v5 M59.6 560.5 v5 M68.0 560.5 v5 M76.5 560.5 v7 M85.0 560.5 v5 M93.4 560.5 v5 M101.9 560.5 v5 M110.3 560.5 v5 M118.8 560.5 v7 M127.3 560.5 v5 M135.7 560.5 v5 M144.2 560.5 v5 M152.6 560.5 v5 M161.1 560.5 v7 M169.6 560.5 v5 M178.0 560.5 v5 M186.5 560.5 v5 M194.9 560.5 v5 M203.4 560.5 v7 M211.9 560.5 v5 M220.3 560.5 v5 M228.8 560.5 v5 M237.2 560.5 v5 M245.7 560.5 v7 M254.2 560.5 v5 M262.6 560.5 v5 M271.1 560.5 v5 M279.5 560.5 v5 M288.0 560.5 v7 M296.5 560.5 v5 M304.9 560.5 v5 M313.4 560.5 v5 M321.8 560.5 v5 M330.3 560.5 v7 M338.8 560.5 v5 M347.2 560.5 v5 M355.7 560.5 v5 M364.1 560.5 v5 M372.6 560.5 v7 M381.1 560.5 v5 M389.5 560.5 v5 M398.0 560.5 v5 M406.4 560.5 v5 M414.9 560.5 v7 M423.4 560.5 v5 M431.8 560.5 v5 M440.3 560.5 v5 M448.7 560.5 v5 M457.2 560.5 v7 M465.7 560.5 v5 M474.1 560.5 v5 M482.6 560.5 v5 M491.0 560.5 v5 M499.5 560.5 v7 M508.0 560.5 v5 M516.4 560.5 v5 M524.9 560.5 v5 M533.3 560.5 v5 M541.8 560.5 v7 M550.3 560.5 v5 M558.7 560.5 v5 M567.2 560.5 v5 M575.6 560.5 v5 M584.1 560.5 v7 M592.6 560.5 v5 M601.0 560.5 v5 M609.5 560.5 v5 M617.9 560.5 v5 M626.4 560.5 v7 M634.9 560.5 v5 M643.3 560.5 v5 M651.8 560.5 v5 M660.2 560.5 v5 M668.7 560.5 v7 M677.2 560.5 v5 M685.6 560.5 v5 M694.1 560.5 v5 M702.5 560.5 v5 M711.0 560.5 v7 M719.5 560.5 v5 M727.9 560.5 v5 M736.4 560.5 v5 M744.8 560.5 v5 M753.3 560.5 v7 M761.8 560.5 v5 M770.2 560.5 v5 M778.7 560.5 v5 M787.1 560.5 v5 M795.6 560.5 v7 M804.1 560.5 v5 M812.5 560.5 v5 M821.0 560.5 v5 M829.4 560.5 v5 M837.9 560.5 v7 M846.4 560.5 v5 M854.8 560.5 v5 M863.3 560.5 v5 M871.7 560.5 v5 M880.2 560.5 v7" fill="none" stroke="#888" stroke-width="1"/>
<text transform="translate(34.2 573.6) scale(0.83 1)" font-size="7.5" fill="#333" text-anchor="middle">0</text>
<text transform="translate(76.5 573.6) scale(0.83 1)" font-size="7.5" fill="#222" text-anchor="middle">5</text>
<text transform="translate(118.80000000000001 573.6) scale(0.83 1)" font-size="7.5" fill="#222" text-anchor="middle">10</text>
<text transform="translate(161.10000000000002 573.6) scale(0.83 1)" font-size="7.5" fill="#222" text-anchor="middle">15</text>
<text transform="translate(203.40000000000003 573.6) scale(0.83 1)" font-size="7.5" fill="#222" text-anchor="middle">20</text>
<text transform="translate(245.70000000000005 573.6) scale(0.83 1)" font-size="7.5" fill="#222" text-anchor="middle">25</text>
<text transform="translate(288.0 573.6) scale(0.83 1)" font-size="7.5" fill="#222" text-anchor="middle">30</text>
<text transform="translate(330.3 573.6) scale(0.83 1)" font-size="7.5" fill="#222" text-anchor="middle">35</text>
<text transform="translate(372.6 573.6) scale(0.83 1)" font-size="7.5" fill="#222" text-anchor="middle">40</text>
<text transform="translate(414.90000000000003 573.6) scale(0.83 1)" font-size="7.5" fill="#222" text-anchor="middle">45</text>
<text transform="translate(457.20000000000005 573.6) scale(0.83 1)" font-size="7.5" fill="#222" text-anchor="middle">50</text>
<text transform="translate(499.50000000000006 573.6) scale(0.83 1)" font-size="7.5" fill="#222" text-anchor="middle">55</text>
<text transform="translate(541.8000000000001 573.6) scale(0.83 1)" font-size="7.5" fill="#222" text-anchor="middle">60</text>
<text transform="translate(584.1000000000001 573.6) scale(0.83 1)" font-size="7.5" fill="#222" text-anchor="middle">65</text>
<text transform="translate(626.4000000000001 573.6) scale(0.83 1)" font-size="7.5" fill="#222" text-anchor="middle">70</text>
<text transform="translate(668.7000000000002 573.6) scale(0.83 1)" font-size="7.5" fill="#222" text-anchor="middle">75</text>
<text transform="translate(711.0000000000001 573.6) scale(0.83 1)" font-size="7.5" fill="#222" text-anchor="middle">80</text>
<text transform="translate(753.3000000000001 573.6) scale(0.83 1)" font-size="7.5" fill="#222" text-anchor="middle">85</text>
<text transform="translate(795.6000000000001 573.6) scale(0.83 1)" font-size="7.5" fill="#222" text-anchor="middle">90</text>
<text transform="translate(837.9000000000001 573.6) scale(0.83 1)" font-size="7.5" fill="#222" text-anchor="middle">95</text>
<text transform="translate(880.2000000000002 573.6) scale(0.83 1)" font-size="7.5" fill="#222" text-anchor="middle">100</text>
<rect x="1" y="577.5" width="58.5" height="11.5" fill="#e2c8c8"/>
<path d="M1.5 589 V578 H59.5" fill="none" stroke="#bbb" stroke-width="1"/>
<rect x="1" y="591" width="59.5" height="14" fill="#fdfdfd"/>
<path d="M1.5 605 V591.5 H60.5" fill="none" stroke="#aaa" stroke-width="1"/>
<rect x="62" y="578" width="1" height="29" fill="#e8e8e8"/>
<rect x="63" y="578" width="1" height="29" fill="#9a9a9a"/>
<rect x="65" y="578" width="443.2" height="12.600000000000023" fill="#c5c5c5"/>
<path d="M65.5 590.6 V578.5 H508.2" fill="none" stroke="#8a8a8a" stroke-width="1"/>
<path d="M65 590.1 H507.7 V578" fill="none" stroke="#ececec" stroke-width="1"/>
<text transform="translate(68.5 587.8) scale(0.83 1)" font-size="8" fill="#111">1 Object Selected</text>
<rect x="65" y="593" width="612" height="13" fill="#c5c5c5"/>
<path d="M65.5 606 V593.5 H677" fill="none" stroke="#8a8a8a" stroke-width="1"/>
<path d="M65 605.5 H676.5 V593" fill="none" stroke="#ececec" stroke-width="1"/>
<text transform="translate(68.5 602.6) scale(0.83 1)" font-size="8" fill="#111">Click or click-and-drag to select objects</text>
<rect x="514" y="582" width="5" height="5" fill="#333"/>
<path d="M515 582 v-2 a1.5 1.5 0 0 1 3 0 v2" fill="none" stroke="#333" stroke-width="1"/>
<rect x="529.5" y="578.5" width="9" height="10" fill="#ddd" stroke="#444" stroke-width="1"/>
<rect x="532.5" y="582" width="3" height="3" fill="#333"/>
<text transform="translate(539.5 588) scale(0.83 1)" font-size="8" fill="#111">X:</text>
<rect x="549.7" y="578" width="34.299999999999955" height="12.5" fill="#e4e4e4"/>
<path d="M550.2 590.5 V578.5 H584" fill="none" stroke="#8a8a8a" stroke-width="1"/>
<path d="M549.7 590.0 H583.5 V578" fill="none" stroke="#ececec" stroke-width="1"/>
<path d="M550.5 590 V579 H584" fill="none" stroke="#333" stroke-width="1.2"/>
<text transform="translate(593 588) scale(0.83 1)" font-size="8" fill="#111">Y:</text>
<rect x="599.5" y="578" width="34.200000000000045" height="12.5" fill="#e4e4e4"/>
<path d="M600.0 590.5 V578.5 H633.7" fill="none" stroke="#8a8a8a" stroke-width="1"/>
<path d="M599.5 590.0 H633.2 V578" fill="none" stroke="#ececec" stroke-width="1"/>
<path d="M600.5 590 V579 H633.7" fill="none" stroke="#333" stroke-width="1.2"/>
<text transform="translate(643 588) scale(0.83 1)" font-size="8" fill="#111">Z:</text>
<rect x="649.5" y="578" width="34.200000000000045" height="12.5" fill="#e4e4e4"/>
<path d="M650.0 590.5 V578.5 H683.7" fill="none" stroke="#8a8a8a" stroke-width="1"/>
<path d="M649.5 590.0 H683.2 V578" fill="none" stroke="#ececec" stroke-width="1"/>
<path d="M650.5 590 V579 H683.7" fill="none" stroke="#333" stroke-width="1.2"/>
<rect x="693.3" y="578" width="60.10000000000002" height="12.5" fill="#c5c5c5"/>
<path d="M693.8 590.5 V578.5 H753.4" fill="none" stroke="#8a8a8a" stroke-width="1"/>
<path d="M693.3 590.0 H752.9 V578" fill="none" stroke="#ececec" stroke-width="1"/>
<text transform="translate(697 587.6) scale(0.83 1)" font-size="8" fill="#111">Grid = 100,0</text>
<rect x="681" y="594" width="8" height="10" fill="#ddd"/>
<rect x="693.3" y="593" width="60.10000000000002" height="13" fill="#c5c5c5"/>
<path d="M693.8 606 V593.5 H753.4" fill="none" stroke="#8a8a8a" stroke-width="1"/>
<path d="M693.3 605.5 H752.9 V593" fill="none" stroke="#ececec" stroke-width="1"/>
<text transform="translate(697 602.6) scale(0.83 1)" font-size="8" fill="#111">Add Time Tag</text>
<rect x="755.9" y="577.4" width="25.700000000000045" height="25.399999999999977" fill="#c8c8c8"/>
<path d="M756.4 602.8 V577.9 H781.6" fill="none" stroke="#f0f0f0" stroke-width="1"/>
<path d="M755.9 602.3 H781.1 V577.4" fill="none" stroke="#858585" stroke-width="1"/>
<circle cx="763.5" cy="590" r="3" fill="none" stroke="#111" stroke-width="1.6"/>
<path d="M766.5 590 H775 M771 590 v2.5 M774 590 v2.5" fill="none" stroke="#111" stroke-width="1.6"/>
<rect x="783.4" y="578" width="28.600000000000023" height="12.5" fill="#c8c8c8"/>
<path d="M783.9 590.5 V578.5 H812" fill="none" stroke="#f0f0f0" stroke-width="1"/>
<path d="M783.4 590.0 H811.5 V578" fill="none" stroke="#858585" stroke-width="1"/>
<text transform="translate(797.7 587.6) scale(0.83 1)" font-size="8" fill="#111" text-anchor="middle">Auto Key</text>
<rect x="783.4" y="592" width="28.600000000000023" height="11.5" fill="#c8c8c8"/>
<path d="M783.9 603.5 V592.5 H812" fill="none" stroke="#f0f0f0" stroke-width="1"/>
<path d="M783.4 603.0 H811.5 V592" fill="none" stroke="#858585" stroke-width="1"/>
<text transform="translate(797.7 601.2) scale(0.83 1)" font-size="8" fill="#111" text-anchor="middle">Set Key</text>
<rect x="815" y="578" width="68.79999999999995" height="12.5" fill="#e4e4e4"/>
<path d="M815.5 590.5 V578.5 H883.8" fill="none" stroke="#8a8a8a" stroke-width="1"/>
<path d="M815 590.0 H883.3 V578" fill="none" stroke="#ececec" stroke-width="1"/>
<path d="M815.5 590 V578.5 H883.8" fill="none" stroke="#444" stroke-width="1"/>
<text transform="translate(817 587.6) scale(0.83 1)" font-size="8" fill="#111">Selected</text>
<rect x="875" y="579.5" width="8.5" height="9.5" fill="#eeeedd"/>
<path d="M877 583.3 h4.5 l-2.25 2.5z" fill="#111" stroke="#111" stroke-width="0"/>
<path d="M817 601 q3 0 4 -4 t4 -4" fill="none" stroke="#c03030" stroke-width="1.2"/>
<rect x="827" y="602" width="1.2" height="1.2" fill="#333"/>
<rect x="831" y="592" width="52.799999999999955" height="11.5" fill="#c8c8c8"/>
<path d="M831.5 603.5 V592.5 H883.8" fill="none" stroke="#f0f0f0" stroke-width="1"/>
<path d="M831 603.0 H883.3 V592" fill="none" stroke="#858585" stroke-width="1"/>
<text transform="translate(857.4 601.2) scale(0.83 1)" font-size="8" fill="#111" text-anchor="middle">Key Filters...</text>
<path d="M890.5 582 v6 M892 585 l3.5 -3 v6z M895.5 585 l3.5 -3 v6z" fill="#111" stroke="#111" stroke-width="1"/>
<rect x="903" y="580" width="1" height="10" fill="#a0a0a0"/>
<path d="M907 585 l4 -3.2 v6.4z" fill="#111" stroke="#111" stroke-width="0"/>
<rect x="911.5" y="582" width="1.2" height="6" fill="#111"/>
<rect x="913.5" y="582" width="1.2" height="6" fill="#111"/>
<rect x="920.8" y="579.3" width="9" height="8.6" fill="#c8c8c8" stroke="#111" stroke-width="1.3"/>
<path d="M923.5 581.5 l4.2 2.3 l-4.2 2.3z" fill="#111" stroke="#111" stroke-width="0"/>
<rect x="930.5" y="588.5" width="1" height="1" fill="#333"/>
<rect x="934" y="582" width="1.2" height="6" fill="#111"/>
<rect x="936" y="582" width="1.2" height="6" fill="#111"/>
<path d="M938 581.8 l4.2 3.2 l-4.2 3.2z" fill="#111" stroke="#111" stroke-width="0"/>
<rect x="946.5" y="580" width="1" height="10" fill="#a0a0a0"/>
<path d="M950 582 l3.5 3 l-3.5 3z M953.5 582 l3.5 3 l-3.5 3z M958.5 582 v6" fill="#111" stroke="#111" stroke-width="1"/>
<rect x="964" y="580" width="1" height="24" fill="#a0a0a0"/>
<path d="M891 594.5 v6 M899 594.5 v6 M892.5 597.5 l3 -2.5 v5z M897.5 597.5 l-3 -2.5 v5z" fill="#111" stroke="#111" stroke-width="0.8"/>
<rect x="904.5" y="591.5" width="39.700000000000045" height="12.0" fill="#e4e4e4"/>
<path d="M905.0 603.5 V592.0 H944.2" fill="none" stroke="#8a8a8a" stroke-width="1"/>
<path d="M904.5 603.0 H943.7 V591.5" fill="none" stroke="#ececec" stroke-width="1"/>
<path d="M905 603 V592 H944.2" fill="none" stroke="#444" stroke-width="1.2"/>
<text transform="translate(906.5 601.8) scale(0.83 1)" font-size="9" fill="#111">0</text>
<rect x="944.2" y="591.5" width="5.7999999999999545" height="12.0" fill="#c8c8c8"/>
<path d="M944.7 603.5 V592.0 H950" fill="none" stroke="#f0f0f0" stroke-width="1"/>
<path d="M944.2 603.0 H949.5 V591.5" fill="none" stroke="#858585" stroke-width="1"/>
<path d="M945.6 596 h3 l-1.5 -2z M945.6 599 h3 l-1.5 2z" fill="#111" stroke="#111" stroke-width="0"/>
<rect x="953" y="593.5" width="6" height="8" fill="#ddd" stroke="#555" stroke-width="0.8"/>
<circle cx="959" cy="598" r="2.6" fill="#eee" stroke="#c03030" stroke-width="1"/>
<circle cx="971.5" cy="582" r="2.8" fill="#e8e8f0" stroke="#2a3a90" stroke-width="1.1"/>
<path d="M973.5 584 l3.5 3.5" fill="none" stroke="#2a3a90" stroke-width="1.6"/>
<path d="M984 579.5 h8 v8 h-8z M988 579.5 v8 M984 583.5 h8" fill="none" stroke="#b02030" stroke-width="0.9"/>
<circle cx="984" cy="586" r="2.4" fill="#dde" stroke="#2a3a90" stroke-width="1"/>
<path d="M998 581 l5 0 l2 -1.5 M998 581 v6 h5 v-6 M1003 587 l2 -1.5 v-6" fill="#aab" stroke="#2a3a90" stroke-width="1"/>
<path d="M995.5 580 v-1 h1 M1005.5 589 v1 h-1" fill="none" stroke="#333" stroke-width="0.8"/>
<path d="M1011 579.5 h8 v8 h-8z M1015 579.5 v8 M1011 583.5 h8" fill="none" stroke="#b02030" stroke-width="0.9"/>
<circle cx="1012" cy="586" r="2.6" fill="#aab" stroke="#2a3a90" stroke-width="1"/>
<path d="M968 594 L977 598 L968 602 M968 594 L972 598 L968 602" fill="none" stroke="#222" stroke-width="1"/>
<path d="M982 602 q-1.5 -5 0 -6 l1 1 v-4 h1.2 v3 v-4 h1.2 v4 v-3.5 h1.2 v4 v-2.5 h1.2 v4 q0 4 -2.5 5z" fill="#f0f0f0" stroke="#222" stroke-width="0.7"/>
<circle cx="1000" cy="598" r="3.5" fill="none" stroke="#333" stroke-width=".9"/>
<path d="M996 598 h8 M1000 594 v8" fill="none" stroke="#2a3a90" stroke-width="0.8"/>
<rect x="1009.5" y="593.5" width="7" height="7" fill="#dde" stroke="#2a3a90" stroke-width="1"/>
<rect x="1013" y="597" width="6" height="6" fill="#eef" stroke="#2a3a90" stroke-width="0.9"/>
<rect x="913" y="548" width="111" height="29" fill="#c5c5c5"/>
<rect x="914" y="548" width="1" height="25" fill="#a8a8a8"/>
<rect x="1019" y="548" width="1" height="24" fill="#b0b0b0"/>
<rect x="1020" y="548" width="1" height="25" fill="#e4e4e4"/>
<rect x="914" y="572" width="107" height="1" fill="#e4e4e4"/>
<rect x="913" y="574.5" width="111" height="1" fill="#9a9a9a"/>
<rect x="0" y="607" width="1024" height="1" fill="#dfe6c8"/>
<rect x="0" y="606.5" width="56" height="1.5" fill="#6fa050"/>
</g></svg><svg style="left:0;top:0" width="1024" height="608"><g font-family="Liberation Sans">
<defs><linearGradient id="tg" x1="0" y1="0" x2="0" y2="1"><stop offset="0" stop-color="#dceab8"/><stop offset=".15" stop-color="#b8c892"/><stop offset=".45" stop-color="#a9b882"/><stop offset=".8" stop-color="#c4d094"/><stop offset="1" stop-color="#9fb070"/></linearGradient></defs>
<path d="M157.5 163 Q157.5 155.5 163 155.5 H399 Q404.5 155.5 404.5 163 V539.5 H157.5 Z" fill="#bccb9c" stroke="#a8c088" stroke-width="1"/>
<rect x="157" y="155.5" width="248" height="17" fill="url(#tg)" rx="5"/>
<rect x="159" y="171.5" width="244" height="367" fill="#c5c5c5"/>
<rect x="159" y="172" width="244" height="2" fill="#d2d2d8"/>
<text x="161.4" y="168.2" font-size="8.4" font-weight="bold" fill="#4a5a38" stroke="#4a5a38" stroke-width="1" opacity=".45" textLength="66" lengthAdjust="spacingAndGlyphs">Object Properties</text>
<text x="161" y="167.6" font-size="8.4" font-weight="bold" fill="#fafaf0" stroke="#fafaf0" stroke-width=".25" textLength="66" lengthAdjust="spacingAndGlyphs">Object Properties</text>
<rect x="375.5" y="157.5" width="12.5" height="13" fill="#8aa068" stroke="#e6eed8" stroke-width="0.8" rx="2"/>
<text transform="translate(381.8 168.5) scale(0.88 1)" font-size="10.5" fill="#eef0e0" stroke="#eef0e0" stroke-width="0.18" text-anchor="middle" font-weight="bold">?</text>
<rect x="389.5" y="157.5" width="13" height="13" fill="#d8643c" stroke="#f6e0d0" stroke-width="0.8" rx="2"/>
<path d="M392.5 160.5 L399.5 167.5 M399.5 160.5 L392.5 167.5" fill="none" stroke="#fff" stroke-width="1.3"/>
<rect x="159" y="185.5" width="244" height="1" fill="#ececec"/>
<rect x="159.5" y="172.5" width="39" height="14" fill="#c5c5c5"/>
<path d="M159.5 186 V173 H198" fill="none" stroke="#f0f0f0" stroke-width="1"/>
<path d="M198 173 V186" fill="none" stroke="#8a8a8a" stroke-width="1"/>
<text transform="translate(178.5 183) scale(0.88 1)" font-size="7.3" fill="#111" stroke="#111" stroke-width="0.18" text-anchor="middle">General</text>
<rect x="199.5" y="174" width="56.5" height="11.5" fill="#c6c6c6"/>
<path d="M199.5 185.5 V174.5 H256.0" fill="none" stroke="#eeeeee" stroke-width="1"/>
<path d="M256.0 174.5 V185.5" fill="none" stroke="#8a8a8a" stroke-width="1"/>
<text transform="translate(227.75 183.4) scale(0.88 1)" font-size="7.3" fill="#111" stroke="#111" stroke-width="0.18" text-anchor="middle">Adv. Lighting</text>
<rect x="257.0" y="174" width="50.80000000000001" height="11.5" fill="#c6c6c6"/>
<path d="M257.0 185.5 V174.5 H307.8" fill="none" stroke="#eeeeee" stroke-width="1"/>
<path d="M307.8 174.5 V185.5" fill="none" stroke="#8a8a8a" stroke-width="1"/>
<text transform="translate(282.4 183.4) scale(0.88 1)" font-size="7.3" fill="#111" stroke="#111" stroke-width="0.18" text-anchor="middle">mental ray</text>
<rect x="308.8" y="174" width="58.39999999999998" height="11.5" fill="#c6c6c6"/>
<path d="M308.8 185.5 V174.5 H367.2" fill="none" stroke="#eeeeee" stroke-width="1"/>
<path d="M367.2 174.5 V185.5" fill="none" stroke="#8a8a8a" stroke-width="1"/>
<text transform="translate(338.0 183.4) scale(0.88 1)" font-size="7.3" fill="#111" stroke="#111" stroke-width="0.18" text-anchor="middle">User Defined</text>
<path d="M167.0 197.0 V300.5 H395.0 V197.0 Z" fill="none" stroke="#8e8e8e" stroke-width="1"/>
<path d="M168.0 198.0 V299.5 M168.0 198.0 H394.0 M166.5 301.5 H396.0 V196.5" fill="none" stroke="#ececec" stroke-width="1"/>
<rect x="170.5" y="192.5" width="55.5" height="8" fill="#c5c5c5"/>
<text transform="translate(171.5 199.0) scale(0.88 1)" font-size="7.3" fill="#111" stroke="#111" stroke-width="0.18">Object Information</text>
<text transform="translate(170 212) scale(0.88 1)" font-size="7.3" fill="#111" stroke="#111" stroke-width="0.18">Name:</text>
<rect x="196" y="203.5" width="178.5" height="11" fill="#e8e8e8"/>
<path d="M196.5 214.5 V204 H374.5" fill="none" stroke="#444" stroke-width="1.3"/>
<text transform="translate(198 212.3) scale(0.88 1)" font-size="7.3" fill="#111" stroke="#111" stroke-width="0.18">Box01</text>
<rect x="376.7" y="203.8" width="16.5" height="11" fill="#9c0838"/>
<text transform="translate(204.3 226.4) scale(0.88 1)" font-size="7.3" fill="#111" stroke="#111" stroke-width="0.18" text-anchor="end">Dimensions:</text>
<text transform="translate(215.8 226.4) scale(0.88 1)" font-size="7.3" fill="#111" stroke="#111" stroke-width="0.18" text-anchor="end">X:</text>
<text transform="translate(215.8 236) scale(0.88 1)" font-size="7.3" fill="#111" stroke="#111" stroke-width="0.18" text-anchor="end">Y:</text>
<text transform="translate(215.8 245.8) scale(0.88 1)" font-size="7.3" fill="#111" stroke="#111" stroke-width="0.18" text-anchor="end">Z:</text>
<text transform="translate(216.6 257.8) scale(0.88 1)" font-size="7.3" fill="#111" stroke="#111" stroke-width="0.18" text-anchor="end">Vertices:</text>
<text transform="translate(216.6 267.4) scale(0.88 1)" font-size="7.3" fill="#111" stroke="#111" stroke-width="0.18" text-anchor="end">Faces:</text>
<rect x="219" y="219.2" width="31.599999999999994" height="8.600000000000023" fill="#c7c7c7"/>
<path d="M219 219.7 H250.6" fill="none" stroke="#b0b0ac" stroke-width="1"/>
<path d="M219 227.3 H250.1 V219.2" fill="none" stroke="#ededf0" stroke-width="1"/>
<text transform="translate(220.5 225.8) scale(0.88 1)" font-size="7.3" fill="#1e1e1e" stroke="#1e1e1e" stroke-width="0.18">1750,0</text>
<rect x="219" y="229" width="31.599999999999994" height="8.400000000000006" fill="#c7c7c7"/>
<path d="M219 229.5 H250.6" fill="none" stroke="#b0b0ac" stroke-width="1"/>
<path d="M219 236.9 H250.1 V229" fill="none" stroke="#ededf0" stroke-width="1"/>
<text transform="translate(220.5 235.4) scale(0.88 1)" font-size="7.3" fill="#1e1e1e" stroke="#1e1e1e" stroke-width="0.18">4775,0</text>
<rect x="219" y="238.9" width="31.599999999999994" height="8.799999999999983" fill="#c7c7c7"/>
<path d="M219 239.4 H250.6" fill="none" stroke="#b0b0ac" stroke-width="1"/>
<path d="M219 247.2 H250.1 V238.9" fill="none" stroke="#ededf0" stroke-width="1"/>
<text transform="translate(220.5 245.7) scale(0.88 1)" font-size="7.3" fill="#1e1e1e" stroke="#1e1e1e" stroke-width="0.18">1410,0</text>
<rect x="219" y="251.4" width="31.599999999999994" height="8.200000000000017" fill="#c7c7c7"/>
<path d="M219 251.9 H250.6" fill="none" stroke="#b0b0ac" stroke-width="1"/>
<path d="M219 259.1 H250.1 V251.4" fill="none" stroke="#ededf0" stroke-width="1"/>
<text transform="translate(220.5 257.6) scale(0.88 1)" font-size="7.3" fill="#1e1e1e" stroke="#1e1e1e" stroke-width="0.18">8</text>
<rect x="219" y="261" width="31.599999999999994" height="8.199999999999989" fill="#c7c7c7"/>
<path d="M219 261.5 H250.6" fill="none" stroke="#b0b0ac" stroke-width="1"/>
<path d="M219 268.7 H250.1 V261" fill="none" stroke="#ededf0" stroke-width="1"/>
<text transform="translate(220.5 267.2) scale(0.88 1)" font-size="7.3" fill="#1e1e1e" stroke="#1e1e1e" stroke-width="0.18">12</text>
<rect x="219" y="270.7" width="31.599999999999994" height="8.100000000000023" fill="#c7c7c7"/>
<path d="M219 271.2 H250.6" fill="none" stroke="#b0b0ac" stroke-width="1"/>
<path d="M219 278.3 H250.1 V270.7" fill="none" stroke="#ededf0" stroke-width="1"/>
<text transform="translate(220.5 276.8) scale(0.88 1)" font-size="7.3" fill="#9a9a9a" stroke="#9a9a9a" stroke-width="0.18">0</text>
<rect x="219" y="280.7" width="31.599999999999994" height="8.5" fill="#c7c7c7"/>
<path d="M219 281.2 H250.6" fill="none" stroke="#b0b0ac" stroke-width="1"/>
<path d="M219 288.7 H250.1 V280.7" fill="none" stroke="#ededf0" stroke-width="1"/>
<text transform="translate(220.5 287.2) scale(0.88 1)" font-size="7.3" fill="#9a9a9a" stroke="#9a9a9a" stroke-width="0.18">0</text>
<text transform="translate(252 226.4) scale(0.88 1)" font-size="7.3" fill="#111" stroke="#111" stroke-width="0.18">Material Name:</text>
<text transform="translate(252 236) scale(0.88 1)" font-size="7.3" fill="#111" stroke="#111" stroke-width="0.18">Layer:</text>
<text transform="translate(252 257.8) scale(0.88 1)" font-size="7.3" fill="#111" stroke="#111" stroke-width="0.18">Parent:</text>
<text transform="translate(252 267.4) scale(0.88 1)" font-size="7.3" fill="#111" stroke="#111" stroke-width="0.18">Num. Children:</text>
<text transform="translate(252 287.6) scale(0.88 1)" font-size="7.3" fill="#111" stroke="#111" stroke-width="0.18">In Group/Assembly:</text>
<rect x="296.2" y="219" width="98.0" height="8.5" fill="#c7c7c7"/>
<path d="M296.2 219.5 H394.2" fill="none" stroke="#b0b0ac" stroke-width="1"/>
<path d="M296.2 227.0 H393.7 V219" fill="none" stroke="#ededf0" stroke-width="1"/>
<text transform="translate(297.7 225.5) scale(0.88 1)" font-size="7.3" fill="#1e1e1e" stroke="#1e1e1e" stroke-width="0.18">02 - Default</text>
<rect x="296.2" y="228.8" width="98.0" height="8.5" fill="#c7c7c7"/>
<path d="M296.2 229.3 H394.2" fill="none" stroke="#b0b0ac" stroke-width="1"/>
<path d="M296.2 236.8 H393.7 V228.8" fill="none" stroke="#ededf0" stroke-width="1"/>
<text transform="translate(297.7 235.3) scale(0.88 1)" font-size="7.3" fill="#1e1e1e" stroke="#1e1e1e" stroke-width="0.18">0 (default)</text>
<rect x="296.2" y="251.2" width="98.0" height="8.300000000000011" fill="#c7c7c7"/>
<path d="M296.2 251.7 H394.2" fill="none" stroke="#b0b0ac" stroke-width="1"/>
<path d="M296.2 259.0 H393.7 V251.2" fill="none" stroke="#ededf0" stroke-width="1"/>
<text transform="translate(297.7 257.5) scale(0.88 1)" font-size="7.3" fill="#1e1e1e" stroke="#1e1e1e" stroke-width="0.18">Scene Root</text>
<rect x="296.2" y="260.4" width="98.0" height="9.200000000000045" fill="#c7c7c7"/>
<path d="M296.2 260.9 H394.2" fill="none" stroke="#b0b0ac" stroke-width="1"/>
<path d="M296.2 269.1 H393.7 V260.4" fill="none" stroke="#ededf0" stroke-width="1"/>
<text transform="translate(297.7 267.6) scale(0.88 1)" font-size="7.3" fill="#1e1e1e" stroke="#1e1e1e" stroke-width="0.18">0</text>
<rect x="310" y="280.5" width="84.19999999999999" height="9.199999999999989" fill="#c7c7c7"/>
<path d="M310 281.0 H394.2" fill="none" stroke="#b0b0ac" stroke-width="1"/>
<path d="M310 289.2 H393.7 V280.5" fill="none" stroke="#ededf0" stroke-width="1"/>
<text transform="translate(311.5 287.7) scale(0.88 1)" font-size="7.3" fill="#1e1e1e" stroke="#1e1e1e" stroke-width="0.18">None</text>
<path d="M166.7 309.5 V341.9 H275.0 V309.5 Z" fill="none" stroke="#8e8e8e" stroke-width="1"/>
<path d="M167.7 310.5 V340.9 M167.7 310.5 H274.0 M166.2 342.9 H276.0 V309" fill="none" stroke="#ececec" stroke-width="1"/>
<rect x="170.2" y="305" width="35.80000000000001" height="8" fill="#c5c5c5"/>
<text transform="translate(171.2 311.5) scale(0.88 1)" font-size="7.3" fill="#111" stroke="#111" stroke-width="0.18">Interactivity</text>
<rect x="170" y="316.9" width="7.5" height="7.5" fill="#e6e6e6"/>
<rect x="171.5" y="318.4" width="6" height="6" fill="#f0f0f0"/>
<path d="M170.5 324.4 V317.4 H177.5" fill="none" stroke="#7a7a7a" stroke-width="1"/>
<path d="M171.5 323.9 V318.4 H177" fill="none" stroke="#b0b0b0" stroke-width="0.8"/>
<text transform="translate(181.5 323.6) scale(0.88 1)" font-size="7.3" fill="#111" stroke="#111" stroke-width="0.18">Hide</text>
<rect x="170" y="327.9" width="7.5" height="7.5" fill="#e6e6e6"/>
<rect x="171.5" y="329.4" width="6" height="6" fill="#f0f0f0"/>
<path d="M170.5 335.4 V328.4 H177.5" fill="none" stroke="#7a7a7a" stroke-width="1"/>
<path d="M171.5 334.9 V329.4 H177" fill="none" stroke="#b0b0b0" stroke-width="0.8"/>
<path d="M171.8 331.5 L173.3 333.5 L176.4 329.5" fill="none" stroke="#111" stroke-width="1.5"/>
<text transform="translate(181.5 334.6) scale(0.88 1)" font-size="7.3" fill="#111" stroke="#111" stroke-width="0.18">Freeze</text>
<path d="M166.7 349.1 V502.0 H275.0 V349.1 Z" fill="none" stroke="#8e8e8e" stroke-width="1"/>
<path d="M167.7 350.1 V501.0 M167.7 350.1 H274.0 M166.2 503.0 H276.0 V348.6" fill="none" stroke="#ececec" stroke-width="1"/>
<rect x="170.2" y="344.6" width="54.80000000000001" height="8" fill="#c5c5c5"/>
<text transform="translate(171.2 351.1) scale(0.88 1)" font-size="7.3" fill="#111" stroke="#111" stroke-width="0.18">Display Properties</text>
<rect x="170" y="360.8" width="7.5" height="7.5" fill="#e6e6e6"/>
<rect x="171.5" y="362.3" width="6" height="6" fill="#f0f0f0"/>
<path d="M170.5 368.3 V361.3 H177.5" fill="none" stroke="#7a7a7a" stroke-width="1"/>
<path d="M171.5 367.8 V362.3 H177" fill="none" stroke="#b0b0b0" stroke-width="0.8"/>
<text transform="translate(181.5 366.8) scale(0.88 1)" font-size="7.3" fill="#111" stroke="#111" stroke-width="0.18">See-Through</text>
<rect x="170" y="371.90000000000003" width="7.5" height="7.5" fill="#e6e6e6"/>
<rect x="171.5" y="373.40000000000003" width="6" height="6" fill="#f0f0f0"/>
<path d="M170.5 379.40000000000003 V372.40000000000003 H177.5" fill="none" stroke="#7a7a7a" stroke-width="1"/>
<path d="M171.5 378.90000000000003 V373.40000000000003 H177" fill="none" stroke="#b0b0b0" stroke-width="0.8"/>
<text transform="translate(181.5 377.90000000000003) scale(0.88 1)" font-size="7.3" fill="#111" stroke="#111" stroke-width="0.18">Display as Box</text>
<rect x="170" y="382.8" width="7.5" height="7.5" fill="#e6e6e6"/>
<rect x="171.5" y="384.3" width="6" height="6" fill="#f0f0f0"/>
<path d="M170.5 390.3 V383.3 H177.5" fill="none" stroke="#7a7a7a" stroke-width="1"/>
<path d="M171.5 389.8 V384.3 H177" fill="none" stroke="#b0b0b0" stroke-width="0.8"/>
<path d="M171.8 386.40000000000003 L173.3 388.40000000000003 L176.4 384.40000000000003" fill="none" stroke="#111" stroke-width="1.5"/>
<text transform="translate(181.5 388.8) scale(0.88 1)" font-size="7.3" fill="#111" stroke="#111" stroke-width="0.18">Backface Cull</text>
<rect x="170" y="393.5" width="7.5" height="7.5" fill="#e6e6e6"/>
<rect x="171.5" y="395.0" width="6" height="6" fill="#f0f0f0"/>
<path d="M170.5 401.0 V394.0 H177.5" fill="none" stroke="#7a7a7a" stroke-width="1"/>
<path d="M171.5 400.5 V395.0 H177" fill="none" stroke="#b0b0b0" stroke-width="0.8"/>
<path d="M171.8 397.1 L173.3 399.1 L176.4 395.1" fill="none" stroke="#111" stroke-width="1.5"/>
<text transform="translate(181.5 399.5) scale(0.88 1)" font-size="7.3" fill="#111" stroke="#111" stroke-width="0.18">Edges Only</text>
<rect x="170" y="404.3" width="7.5" height="7.5" fill="#e6e6e6"/>
<rect x="171.5" y="405.8" width="6" height="6" fill="#f0f0f0"/>
<path d="M170.5 411.8 V404.8 H177.5" fill="none" stroke="#7a7a7a" stroke-width="1"/>
<path d="M171.5 411.3 V405.8 H177" fill="none" stroke="#b0b0b0" stroke-width="0.8"/>
<text transform="translate(181.5 410.3) scale(0.88 1)" font-size="7.3" fill="#111" stroke="#111" stroke-width="0.18">Vertex Ticks</text>
<rect x="170" y="415.3" width="7.5" height="7.5" fill="#e6e6e6"/>
<rect x="171.5" y="416.8" width="6" height="6" fill="#f0f0f0"/>
<path d="M170.5 422.8 V415.8 H177.5" fill="none" stroke="#7a7a7a" stroke-width="1"/>
<path d="M171.5 422.3 V416.8 H177" fill="none" stroke="#b0b0b0" stroke-width="0.8"/>
<text transform="translate(181.5 421.3) scale(0.88 1)" font-size="7.3" fill="#111" stroke="#111" stroke-width="0.18">Trajectory</text>
<rect x="170" y="426.3" width="7.5" height="7.5" fill="#e6e6e6"/>
<rect x="171.5" y="427.8" width="6" height="6" fill="#f0f0f0"/>
<path d="M170.5 433.8 V426.8 H177.5" fill="none" stroke="#7a7a7a" stroke-width="1"/>
<path d="M171.5 433.3 V427.8 H177" fill="none" stroke="#b0b0b0" stroke-width="0.8"/>
<text transform="translate(181.5 432.3) scale(0.88 1)" font-size="7.3" fill="#111" stroke="#111" stroke-width="0.18">Ignore Extents</text>
<rect x="170" y="437.3" width="7.5" height="7.5" fill="#e6e6e6"/>
<rect x="171.5" y="438.8" width="6" height="6" fill="#f0f0f0"/>
<path d="M170.5 444.8 V437.8 H177.5" fill="none" stroke="#7a7a7a" stroke-width="1"/>
<path d="M171.5 444.3 V438.8 H177" fill="none" stroke="#b0b0b0" stroke-width="0.8"/>
<text transform="translate(181.5 443.3) scale(0.88 1)" font-size="7.3" fill="#111" stroke="#111" stroke-width="0.18">Show Frozen in Gray</text>
<rect x="170" y="448.1" width="7.5" height="7.5" fill="#e6e6e6"/>
<rect x="171.5" y="449.6" width="6" height="6" fill="#f0f0f0"/>
<path d="M170.5 455.6 V448.6 H177.5" fill="none" stroke="#7a7a7a" stroke-width="1"/>
<path d="M171.5 455.1 V449.6 H177" fill="none" stroke="#b0b0b0" stroke-width="0.8"/>
<text transform="translate(181.5 454.1) scale(0.88 1)" font-size="7.3" fill="#111" stroke="#111" stroke-width="0.18">Vertex Channel Display</text>
<rect x="238.5" y="359.9" width="31.399999999999977" height="9.900000000000034" fill="#c8c8c8"/>
<path d="M239.0 369.8 V360.4 H269.9" fill="none" stroke="#f4f4f4" stroke-width="1"/>
<path d="M238.5 369.3 H269.4 V359.9" fill="none" stroke="#8a8a8a" stroke-width="1"/>
<text transform="translate(254.2 367.45000000000005) scale(0.88 1)" font-size="7.3" fill="#111" stroke="#111" stroke-width="0.18" text-anchor="middle">By Object</text>
<rect x="170" y="458.5" width="63.6" height="11" fill="#e3e3e3"/>
<path d="M170.5 469.5 V459 H233.6" fill="none" stroke="#555" stroke-width="1"/>
<rect x="224" y="460" width="9" height="8.8" fill="#eeeedd"/>
<path d="M226.3 463.2 h4.4 l-2.2 2.4z" fill="#111" stroke="#111" stroke-width="0"/>
<text transform="translate(172 466.8) scale(0.88 1)" font-size="7.3" fill="#111" stroke="#111" stroke-width="0.18">Vertex Color</text>
<rect x="238.5" y="458.2" width="31.100000000000023" height="10.600000000000023" fill="#c8c8c8"/>
<path d="M239.0 468.8 V458.7 H269.6" fill="none" stroke="#f4f4f4" stroke-width="1"/>
<path d="M238.5 468.3 H269.1 V458.2" fill="none" stroke="#8a8a8a" stroke-width="1"/>
<text transform="translate(254.05 466.1) scale(0.88 1)" font-size="7.3" fill="#111" stroke="#111" stroke-width="0.18" text-anchor="middle">Shaded</text>
<text transform="translate(234 479.2) scale(0.88 1)" font-size="7.3" fill="#9a9a9a" stroke="#9a9a9a" stroke-width="0.18" text-anchor="end">Map Channel:</text>
<rect x="238" y="471.8" width="26.5" height="8.899999999999977" fill="#e4e4e4"/>
<path d="M238.5 480.7 V472.3 H264.5" fill="none" stroke="#333" stroke-width="1"/>
<path d="M239.5 480.7 V473.3 H264.5" fill="none" stroke="#777" stroke-width="0.8"/>
<text transform="translate(240 478.9) scale(0.88 1)" font-size="7.3" fill="#a0a0a0" stroke="#a0a0a0" stroke-width="0.18">1</text>
<rect x="264.5" y="471.8" width="6.5" height="8.899999999999977" fill="#c8c8c8"/>
<path d="M264.5 480.2 H270.5 V471.8" fill="none" stroke="#9a9a9a" stroke-width="1"/>
<path d="M266.25 475.25 h3 l-1.5 -2z" fill="#111" stroke="#111" stroke-width="0"/>
<path d="M266.25 477.25 h3 l-1.5 2z" fill="#111" stroke="#111" stroke-width="0"/>
<path d="M281.5 310.1 V441.7 H394.1 V310.1 Z" fill="none" stroke="#8e8e8e" stroke-width="1"/>
<path d="M282.5 311.1 V440.7 M282.5 311.1 H393.1 M281 442.7 H395.1 V309.6" fill="none" stroke="#ececec" stroke-width="1"/>
<rect x="285" y="305.6" width="55" height="8" fill="#c5c5c5"/>
<text transform="translate(286 312.1) scale(0.88 1)" font-size="7.3" fill="#111" stroke="#111" stroke-width="0.18">Rendering Control</text>
<text transform="translate(286 324) scale(0.88 1)" font-size="7.3" fill="#111" stroke="#111" stroke-width="0.18">Visibility:</text>
<rect x="312.8" y="316" width="22.19999999999999" height="9.199999999999989" fill="#e4e4e4"/>
<path d="M313.3 325.2 V316.5 H335" fill="none" stroke="#333" stroke-width="1"/>
<path d="M314.3 325.2 V317.5 H335" fill="none" stroke="#777" stroke-width="0.8"/>
<text transform="translate(314.8 323.4) scale(0.88 1)" font-size="7.3" fill="#1e1e1e" stroke="#1e1e1e" stroke-width="0.18">1,0</text>
<rect x="335" y="316" width="6.5" height="9.199999999999989" fill="#c8c8c8"/>
<path d="M335 324.7 H341.0 V316" fill="none" stroke="#9a9a9a" stroke-width="1"/>
<path d="M336.75 319.6 h3 l-1.5 -2z" fill="#111" stroke="#111" stroke-width="0"/>
<path d="M336.75 321.6 h3 l-1.5 2z" fill="#111" stroke="#111" stroke-width="0"/>
<rect x="353.2" y="316.6" width="31.69999999999999" height="9.799999999999955" fill="#c8c8c8"/>
<path d="M353.7 326.4 V317.1 H384.9" fill="none" stroke="#f4f4f4" stroke-width="1"/>
<path d="M353.2 325.9 H384.4 V316.6" fill="none" stroke="#8a8a8a" stroke-width="1"/>
<text transform="translate(369.04999999999995 324.1) scale(0.88 1)" font-size="7.3" fill="#111" stroke="#111" stroke-width="0.18" text-anchor="middle">By Object</text>
<rect x="285" y="328.1" width="7.5" height="7.5" fill="#e6e6e6"/>
<rect x="286.5" y="329.6" width="6" height="6" fill="#f0f0f0"/>
<path d="M285.5 335.6 V328.6 H292.5" fill="none" stroke="#7a7a7a" stroke-width="1"/>
<path d="M286.5 335.1 V329.6 H292" fill="none" stroke="#b0b0b0" stroke-width="0.8"/>
<path d="M286.8 331.70000000000005 L288.3 333.70000000000005 L291.4 329.70000000000005" fill="none" stroke="#111" stroke-width="1.5"/>
<text transform="translate(295.7 334.1) scale(0.88 1)" font-size="7.3" fill="#111" stroke="#111" stroke-width="0.18">Renderable</text>
<rect x="285" y="339.1" width="7.5" height="7.5" fill="#e6e6e6"/>
<rect x="286.5" y="340.6" width="6" height="6" fill="#f0f0f0"/>
<path d="M285.5 346.6 V339.6 H292.5" fill="none" stroke="#7a7a7a" stroke-width="1"/>
<path d="M286.5 346.1 V340.6 H292" fill="none" stroke="#b0b0b0" stroke-width="0.8"/>
<path d="M286.8 342.70000000000005 L288.3 344.70000000000005 L291.4 340.70000000000005" fill="none" stroke="#111" stroke-width="1.5"/>
<text transform="translate(295.7 345.1) scale(0.88 1)" font-size="7.3" fill="#111" stroke="#111" stroke-width="0.18">Inherit Visibility</text>
<rect x="285" y="349.90000000000003" width="7.5" height="7.5" fill="#e6e6e6"/>
<rect x="286.5" y="351.40000000000003" width="6" height="6" fill="#f0f0f0"/>
<path d="M285.5 357.40000000000003 V350.40000000000003 H292.5" fill="none" stroke="#7a7a7a" stroke-width="1"/>
<path d="M286.5 356.90000000000003 V351.40000000000003 H292" fill="none" stroke="#b0b0b0" stroke-width="0.8"/>
<path d="M286.8 353.50000000000006 L288.3 355.50000000000006 L291.4 351.50000000000006" fill="none" stroke="#111" stroke-width="1.5"/>
<text transform="translate(295.7 355.90000000000003) scale(0.88 1)" font-size="7.3" fill="#111" stroke="#111" stroke-width="0.18">Visible to Camera</text>
<rect x="285" y="360.8" width="7.5" height="7.5" fill="#e6e6e6"/>
<rect x="286.5" y="362.3" width="6" height="6" fill="#f0f0f0"/>
<path d="M285.5 368.3 V361.3 H292.5" fill="none" stroke="#7a7a7a" stroke-width="1"/>
<path d="M286.5 367.8 V362.3 H292" fill="none" stroke="#b0b0b0" stroke-width="0.8"/>
<path d="M286.8 364.40000000000003 L288.3 366.40000000000003 L291.4 362.40000000000003" fill="none" stroke="#111" stroke-width="1.5"/>
<text transform="translate(295.7 366.8) scale(0.88 1)" font-size="7.3" fill="#111" stroke="#111" stroke-width="0.18">Visible to Reflection/Refraction</text>
<rect x="285" y="371.7" width="7.5" height="7.5" fill="#e6e6e6"/>
<rect x="286.5" y="373.2" width="6" height="6" fill="#f0f0f0"/>
<path d="M285.5 379.2 V372.2 H292.5" fill="none" stroke="#7a7a7a" stroke-width="1"/>
<path d="M286.5 378.7 V373.2 H292" fill="none" stroke="#b0b0b0" stroke-width="0.8"/>
<path d="M286.8 375.3 L288.3 377.3 L291.4 373.3" fill="none" stroke="#111" stroke-width="1.5"/>
<text transform="translate(295.7 377.7) scale(0.88 1)" font-size="7.3" fill="#111" stroke="#111" stroke-width="0.18">Receive Shadows</text>
<rect x="285" y="382.6" width="7.5" height="7.5" fill="#e6e6e6"/>
<rect x="286.5" y="384.1" width="6" height="6" fill="#f0f0f0"/>
<path d="M285.5 390.1 V383.1 H292.5" fill="none" stroke="#7a7a7a" stroke-width="1"/>
<path d="M286.5 389.6 V384.1 H292" fill="none" stroke="#b0b0b0" stroke-width="0.8"/>
<path d="M286.8 386.20000000000005 L288.3 388.20000000000005 L291.4 384.20000000000005" fill="none" stroke="#111" stroke-width="1.5"/>
<text transform="translate(295.7 388.6) scale(0.88 1)" font-size="7.3" fill="#111" stroke="#111" stroke-width="0.18">Cast Shadows</text>
<rect x="285" y="393.3" width="7.5" height="7.5" fill="#e6e6e6"/>
<rect x="286.5" y="394.8" width="6" height="6" fill="#f0f0f0"/>
<path d="M285.5 400.8 V393.8 H292.5" fill="none" stroke="#7a7a7a" stroke-width="1"/>
<path d="M286.5 400.3 V394.8 H292" fill="none" stroke="#b0b0b0" stroke-width="0.8"/>
<path d="M286.8 396.90000000000003 L288.3 398.90000000000003 L291.4 394.90000000000003" fill="none" stroke="#111" stroke-width="1.5"/>
<text transform="translate(295.7 399.3) scale(0.88 1)" font-size="7.3" fill="#111" stroke="#111" stroke-width="0.18">Apply Atmospherics</text>
<rect x="285" y="404.2" width="7.5" height="7.5" fill="#e6e6e6"/>
<rect x="286.5" y="405.7" width="6" height="6" fill="#f0f0f0"/>
<path d="M285.5 411.7 V404.7 H292.5" fill="none" stroke="#7a7a7a" stroke-width="1"/>
<path d="M286.5 411.2 V405.7 H292" fill="none" stroke="#b0b0b0" stroke-width="0.8"/>
<text transform="translate(295.7 410.2) scale(0.88 1)" font-size="7.3" fill="#111" stroke="#111" stroke-width="0.18">Render Occluded Objects</text>
<path d="M281 421.5 H394.6" fill="none" stroke="#8e8e8e" stroke-width="1"/>
<path d="M282 422.5 H394" fill="none" stroke="#ececec" stroke-width="1"/>
<rect x="285" y="417" width="26" height="8" fill="#c5c5c5"/>
<text transform="translate(286 424) scale(0.88 1)" font-size="7.3" fill="#111" stroke="#111" stroke-width="0.18">G-Buffer</text>
<text transform="translate(286 432.6) scale(0.88 1)" font-size="7.3" fill="#111" stroke="#111" stroke-width="0.18">Object ID:</text>
<rect x="318.2" y="425.2" width="26.400000000000034" height="9.199999999999989" fill="#e4e4e4"/>
<path d="M318.7 434.4 V425.7 H344.6" fill="none" stroke="#333" stroke-width="1"/>
<path d="M319.7 434.4 V426.7 H344.6" fill="none" stroke="#777" stroke-width="0.8"/>
<text transform="translate(320.2 432.59999999999997) scale(0.88 1)" font-size="7.3" fill="#1e1e1e" stroke="#1e1e1e" stroke-width="0.18">0</text>
<rect x="344.6" y="425.2" width="7.399999999999977" height="9.199999999999989" fill="#c8c8c8"/>
<path d="M344.6 433.9 H351.5 V425.2" fill="none" stroke="#9a9a9a" stroke-width="1"/>
<path d="M346.8 428.79999999999995 h3 l-1.5 -2z" fill="#111" stroke="#111" stroke-width="0"/>
<path d="M346.8 430.79999999999995 h3 l-1.5 2z" fill="#111" stroke="#111" stroke-width="0"/>
<path d="M280.9 450.1 V502.0 H394.4 V450.1 Z" fill="none" stroke="#8e8e8e" stroke-width="1"/>
<path d="M281.9 451.1 V501.0 M281.9 451.1 H393.4 M280.4 503.0 H395.4 V449.6" fill="none" stroke="#ececec" stroke-width="1"/>
<rect x="284.4" y="445.6" width="36.60000000000002" height="8" fill="#c5c5c5"/>
<text transform="translate(285.4 452.1) scale(0.88 1)" font-size="7.3" fill="#111" stroke="#111" stroke-width="0.18">Motion Blur</text>
<text transform="translate(286 474.6) scale(0.88 1)" font-size="7.3" fill="#111" stroke="#111" stroke-width="0.18">Multiplier:</text>
<rect x="315" y="466.6" width="21.899999999999977" height="9.699999999999989" fill="#e4e4e4"/>
<path d="M315.5 476.3 V467.1 H336.9" fill="none" stroke="#333" stroke-width="1"/>
<path d="M316.5 476.3 V468.1 H336.9" fill="none" stroke="#777" stroke-width="0.8"/>
<text transform="translate(317 474.5) scale(0.88 1)" font-size="7.3" fill="#a0a0a0" stroke="#a0a0a0" stroke-width="0.18">1,0</text>
<rect x="336.9" y="466.6" width="7.100000000000023" height="9.699999999999989" fill="#c8c8c8"/>
<path d="M336.9 475.8 H343.5 V466.6" fill="none" stroke="#9a9a9a" stroke-width="1"/>
<path d="M338.95 470.45000000000005 h3 l-1.5 -2z" fill="#111" stroke="#111" stroke-width="0"/>
<path d="M338.95 472.45000000000005 h3 l-1.5 2z" fill="#111" stroke="#111" stroke-width="0"/>
<rect x="353.5" y="467" width="31.80000000000001" height="9.699999999999989" fill="#c8c8c8"/>
<path d="M354.0 476.7 V467.5 H385.3" fill="none" stroke="#f4f4f4" stroke-width="1"/>
<path d="M353.5 476.2 H384.8 V467" fill="none" stroke="#8a8a8a" stroke-width="1"/>
<text transform="translate(369.4 474.45000000000005) scale(0.88 1)" font-size="7.3" fill="#111" stroke="#111" stroke-width="0.18" text-anchor="middle">By Object</text>
<rect x="285" y="480.2" width="7.5" height="7.5" fill="#e6e6e6"/>
<rect x="286.5" y="481.7" width="6" height="6" fill="#f0f0f0"/>
<path d="M285.5 487.7 V480.7 H292.5" fill="none" stroke="#7a7a7a" stroke-width="1"/>
<path d="M286.5 487.2 V481.7 H292" fill="none" stroke="#b0b0b0" stroke-width="0.8"/>
<path d="M286.8 483.8 L288.3 485.8 L291.4 481.8" fill="none" stroke="#111" stroke-width="1.5"/>
<text transform="translate(295.7 486.6) scale(0.88 1)" font-size="7.3" fill="#111" stroke="#111" stroke-width="0.18">Enabled</text>
<circle cx="289.2" cy="495.0" r="3.2" fill="#ededed"/>
<path d="M286.7 497.0 A3.2 3.2 0 0 1 291.2 492.5" fill="none" stroke="#777" stroke-width="1"/>
<circle cx="289.2" cy="495.0" r="1.3" fill="#111"/>
<text transform="translate(296 498) scale(0.88 1)" font-size="7.3" fill="#111" stroke="#111" stroke-width="0.18">None</text>
<circle cx="323.5" cy="495.0" r="3.2" fill="#ededed"/>
<path d="M321 497.0 A3.2 3.2 0 0 1 325.5 492.5" fill="none" stroke="#777" stroke-width="1"/>
<text transform="translate(330.5 498) scale(0.88 1)" font-size="7.3" fill="#111" stroke="#111" stroke-width="0.18">Object</text>
<circle cx="363.5" cy="495.0" r="3.2" fill="#ededed"/>
<path d="M361 497.0 A3.2 3.2 0 0 1 365.5 492.5" fill="none" stroke="#777" stroke-width="1"/>
<text transform="translate(370.5 498) scale(0.88 1)" font-size="7.3" fill="#111" stroke="#111" stroke-width="0.18">Image</text>
<rect x="299.6" y="517.1" width="45.39999999999998" height="14.699999999999932" fill="#c8c8c8"/>
<path d="M300.1 531.8 V517.6 H345" fill="none" stroke="#f4f4f4" stroke-width="1"/>
<path d="M299.6 531.3 H344.5 V517.1" fill="none" stroke="#8a8a8a" stroke-width="1"/>
<text transform="translate(322.3 527.0500000000001) scale(0.88 1)" font-size="7.3" fill="#111" stroke="#111" stroke-width="0.18" text-anchor="middle">OK</text>
<rect x="352.4" y="517.1" width="44.900000000000034" height="14.699999999999932" fill="#c8c8c8"/>
<path d="M352.9 531.8 V517.6 H397.3" fill="none" stroke="#f4f4f4" stroke-width="1"/>
<path d="M352.4 531.3 H396.8 V517.1" fill="none" stroke="#8a8a8a" stroke-width="1"/>
<text transform="translate(374.85 527.0500000000001) scale(0.88 1)" font-size="7.3" fill="#111" stroke="#111" stroke-width="0.18" text-anchor="middle">Cancel</text>
</g></svg></body></html>
